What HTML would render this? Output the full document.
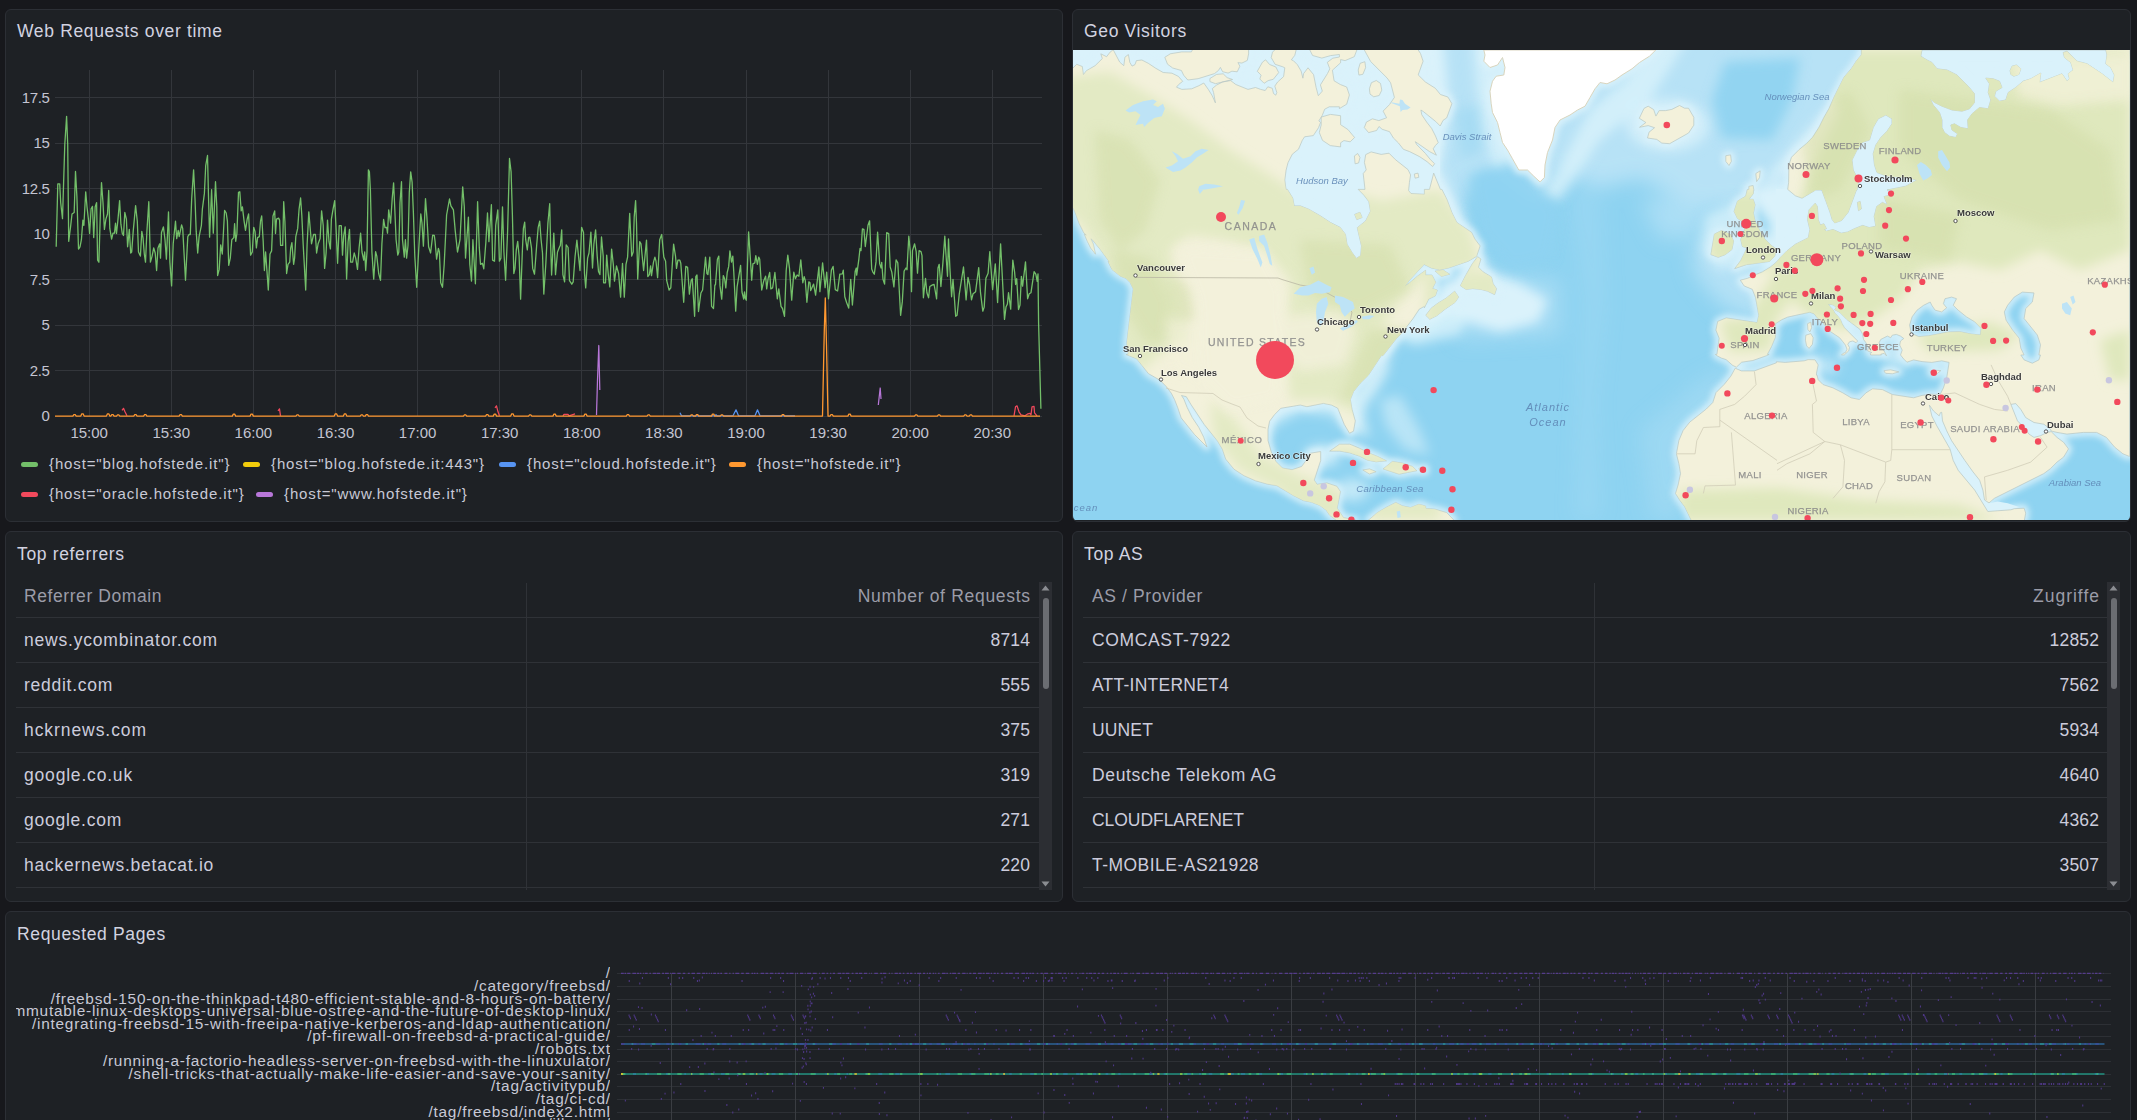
<!DOCTYPE html><html lang="en"><head><meta charset="utf-8"><title>Web traffic dashboard</title><style>
*{box-sizing:border-box;margin:0;padding:0}
html,body{width:2137px;height:1120px;overflow:hidden;background:#17181c;}
body{font-family:"Liberation Sans",sans-serif;color:#ccccdc;position:relative}
.panel{position:absolute;background:#1e2125;border:1px solid #2c2f35;border-radius:6px;overflow:hidden}
.title{position:absolute;left:11px;top:11px;font-size:17.5px;line-height:20px;font-weight:500;color:#d2d3e0;letter-spacing:.65px;white-space:nowrap}
.abs{position:absolute;white-space:nowrap}
.yl{position:absolute;width:43.5px;text-align:right;font-size:15px;line-height:16px;color:#c4c5d2;left:0;letter-spacing:-.35px}
.xl{position:absolute;width:80px;text-align:center;font-size:15px;line-height:16px;color:#c4c5d2;top:414.5px}
.lg{position:absolute;font-size:15px;line-height:18px;color:#c8c9d6;white-space:nowrap;letter-spacing:.87px}
.mk{position:absolute;width:17px;height:5px;border-radius:2.5px}
.th{position:absolute;font-size:17.5px;line-height:20px;color:#9b9ca8;white-space:nowrap;letter-spacing:.2px}
.td{position:absolute;font-size:17.5px;line-height:20px;color:#ccccdc;white-space:nowrap;letter-spacing:.2px}
.r{text-align:right}
.hl{position:absolute;height:1px;background:#2f3237}
.vl{position:absolute;width:1px;background:#2f3237}
.sbt{position:absolute;background:#2c2e33}
.sbh{position:absolute;background:#6b6d72;border-radius:3px}
.hm{position:absolute;right:0;text-align:right;font-size:15.4px;line-height:13px;color:#c8c9d6;white-space:nowrap;letter-spacing:.75px;margin-right:-.75px}
</style></head><body>
<div class="panel" style="left:5px;top:9px;width:1058px;height:513px">
<div class="title">Web Requests over time</div>
<div class="yl" style="top:79.8px">17.5</div>
<div class="yl" style="top:125.3px">15</div>
<div class="yl" style="top:170.8px">12.5</div>
<div class="yl" style="top:216.3px">10</div>
<div class="yl" style="top:261.8px">7.5</div>
<div class="yl" style="top:307.3px">5</div>
<div class="yl" style="top:352.8px">2.5</div>
<div class="yl" style="top:398.3px">0</div>
<div class="xl" style="left:43.2px">15:00</div>
<div class="xl" style="left:125.3px">15:30</div>
<div class="xl" style="left:207.4px">16:00</div>
<div class="xl" style="left:289.5px">16:30</div>
<div class="xl" style="left:371.6px">17:00</div>
<div class="xl" style="left:453.7px">17:30</div>
<div class="xl" style="left:535.8px">18:00</div>
<div class="xl" style="left:617.9px">18:30</div>
<div class="xl" style="left:700.0px">19:00</div>
<div class="xl" style="left:782.1px">19:30</div>
<div class="xl" style="left:864.2px">20:00</div>
<div class="xl" style="left:946.3px">20:30</div>
<svg class="abs" style="left:0;top:0" width="1056" height="440" viewBox="6 10 1056 440"><g stroke="#33363b" stroke-width="1" shape-rendering="crispEdges"><line x1="55" x2="1042" y1="97.5" y2="97.5"/><line x1="55" x2="1042" y1="143.5" y2="143.5"/><line x1="55" x2="1042" y1="188.5" y2="188.5"/><line x1="55" x2="1042" y1="234.5" y2="234.5"/><line x1="55" x2="1042" y1="279.5" y2="279.5"/><line x1="55" x2="1042" y1="325.5" y2="325.5"/><line x1="55" x2="1042" y1="370.5" y2="370.5"/><line x1="55" x2="1042" y1="416.5" y2="416.5"/><line x1="89.5" x2="89.5" y1="70" y2="416.5"/><line x1="171.5" x2="171.5" y1="70" y2="416.5"/><line x1="253.5" x2="253.5" y1="70" y2="416.5"/><line x1="335.5" x2="335.5" y1="70" y2="416.5"/><line x1="417.5" x2="417.5" y1="70" y2="416.5"/><line x1="499.5" x2="499.5" y1="70" y2="416.5"/><line x1="581.5" x2="581.5" y1="70" y2="416.5"/><line x1="663.5" x2="663.5" y1="70" y2="416.5"/><line x1="746.5" x2="746.5" y1="70" y2="416.5"/><line x1="828.5" x2="828.5" y1="70" y2="416.5"/><line x1="910.5" x2="910.5" y1="70" y2="416.5"/><line x1="992.5" x2="992.5" y1="70" y2="416.5"/></g><polyline fill="none" stroke="#73BF69" stroke-width="1.3" stroke-linejoin="round" points="56.2,246.8 57.8,183.8 59.7,183.8 60.7,202.7 62.5,218.7 64.8,144.2 66.6,116.4 67.7,144.2 68.7,241.3 70.5,227.3 72.0,214.0 74.2,212.5 75.5,171.5 76.9,196.5 78.5,249.1 80.0,246.8 81.4,239.7 82.9,220.1 83.9,225.3 85.7,191.8 87.0,206.8 88.4,219.1 89.6,233.5 91.1,208.8 92.5,206.4 93.7,237.6 95.2,206.8 96.6,202.7 97.6,260.2 98.9,262.2 100.3,215.0 101.5,182.6 103.0,202.7 104.4,229.4 105.9,219.1 107.5,214.0 108.7,190.4 109.8,228.4 111.6,239.2 113.0,233.1 114.5,233.1 115.5,223.2 116.5,233.5 118.0,219.1 119.6,200.6 120.9,224.2 122.3,233.5 123.5,235.5 124.8,212.5 126.4,219.1 127.6,246.8 129.3,229.4 130.7,253.0 131.7,252.0 133.2,231.4 135.6,205.6 137.3,221.2 138.5,252.0 140.4,256.1 141.8,231.4 143.0,237.6 144.3,254.0 145.5,262.2 146.9,231.4 148.8,201.7 150.4,262.2 152.1,256.1 153.7,247.9 155.2,253.0 156.6,270.5 158.0,247.9 159.7,243.8 160.5,258.1 161.5,232.5 163.4,226.9 165.0,239.7 166.4,259.2 168.5,211.9 169.9,262.2 171.6,285.9 173.2,243.8 175.5,221.2 176.7,238.6 178.2,230.4 179.2,236.6 181.6,224.9 182.7,228.4 185.5,280.3 187.8,236.6 189.0,234.5 190.3,234.5 191.7,198.6 193.6,169.8 195.0,198.6 196.2,231.4 197.7,253.0 199.1,236.6 201.4,225.3 202.4,208.8 204.4,193.4 205.7,165.7 207.5,155.5 208.5,196.5 209.6,237.2 211.6,189.7 213.3,233.1 215.5,181.7 216.8,206.8 217.6,275.6 219.2,269.4 220.7,244.8 222.3,254.0 224.6,210.3 226.2,213.0 227.4,221.2 228.7,265.3 230.3,258.1 231.8,239.7 233.8,237.6 234.6,223.6 235.7,241.3 236.9,233.5 238.5,192.4 239.8,191.8 241.2,210.9 242.4,206.8 244.1,221.2 245.5,230.4 247.2,219.1 248.6,214.0 250.6,255.1 252.3,252.0 253.7,227.3 255.0,231.4 256.4,247.9 257.6,237.6 259.3,236.6 260.5,221.2 261.7,216.0 263.2,241.7 264.4,270.5 265.6,252.0 268.3,290.0 270.0,254.0 271.6,250.9 273.0,216.0 274.7,210.9 275.5,233.5 276.5,219.1 278.6,218.1 279.6,220.1 280.6,245.4 282.7,245.4 283.7,201.7 284.9,221.2 286.6,273.5 288.0,264.3 289.7,262.2 290.7,247.9 291.9,242.7 293.6,264.3 294.6,258.1 295.8,236.6 297.7,228.4 299.1,208.8 300.6,198.0 301.8,215.0 303.2,244.8 305.7,290.0 307.1,244.8 308.8,211.9 311.5,243.8 313.6,234.5 315.4,234.5 316.6,253.0 318.1,243.8 320.1,238.6 321.6,210.9 323.2,225.3 324.6,268.4 326.1,253.0 327.5,220.1 329.0,241.7 330.4,248.9 331.4,219.1 333.1,208.8 334.7,200.6 336.1,229.4 337.6,263.3 339.2,225.7 341.3,225.7 342.5,255.1 343.7,235.5 345.2,226.9 346.6,279.1 348.1,241.7 349.5,229.4 350.7,262.2 352.6,262.2 354.2,253.0 355.7,258.1 357.5,269.4 359.1,247.9 360.6,233.1 362.0,252.0 363.7,260.2 364.7,252.0 365.7,270.5 367.0,252.0 368.4,169.8 369.4,171.9 370.4,190.4 371.9,252.0 373.7,279.1 375.6,251.6 376.8,256.1 378.7,273.5 380.5,280.3 381.9,243.8 383.6,219.5 385.0,227.7 386.7,227.3 387.5,233.1 388.7,209.9 390.6,223.2 392.2,198.6 393.6,182.8 394.7,206.8 396.1,239.7 397.8,255.1 398.8,252.0 400.0,202.7 401.5,181.7 402.5,239.7 404.3,257.1 405.4,239.7 406.6,258.1 408.0,245.8 409.3,192.4 410.7,171.9 412.1,182.1 413.4,213.0 414.8,256.1 416.7,287.3 418.7,249.9 420.8,214.0 422.0,223.2 423.4,246.2 425.5,198.6 426.9,217.1 428.6,246.8 430.6,253.0 432.7,235.1 434.3,235.5 435.1,241.7 436.6,259.2 438.4,248.3 439.4,252.0 440.7,282.8 442.5,287.3 444.2,264.3 446.6,215.0 449.5,199.0 450.9,205.8 453.4,209.9 455.3,231.4 457.5,252.0 460.0,239.7 462.7,186.9 464.3,206.8 465.5,258.1 468.4,217.1 469.8,264.3 471.5,281.1 472.9,239.7 475.4,283.8 477.6,201.7 479.3,247.9 480.5,264.3 482.4,263.3 483.8,268.8 485.9,241.7 487.5,213.0 488.9,241.7 491.4,204.7 492.6,260.2 494.5,261.2 495.7,225.3 497.8,209.9 499.4,261.2 500.9,258.1 502.5,206.8 503.9,252.0 505.6,280.3 507.6,231.4 509.5,158.5 511.1,171.9 512.4,215.0 513.8,273.5 515.0,268.4 516.3,249.9 517.7,241.3 519.1,256.1 520.6,299.2 522.4,249.9 523.4,228.4 524.7,222.2 525.7,239.7 527.3,249.9 528.6,237.6 529.8,237.2 531.5,247.9 532.7,268.4 534.5,274.2 536.8,243.8 538.2,227.3 539.7,221.2 541.1,239.7 542.5,253.0 543.8,294.1 545.8,264.3 547.9,223.2 549.7,203.7 550.6,243.8 551.6,275.0 553.8,233.1 555.5,274.6 557.5,252.0 560.0,245.8 560.3,245.8 561.7,229.8 562.9,274.6 564.6,281.8 566.2,244.8 568.1,247.5 569.5,280.7 571.8,284.2 573.2,281.8 575.1,256.1 576.9,240.1 578.5,256.1 580.0,270.5 581.6,227.3 583.5,232.5 584.5,273.5 585.7,287.9 587.6,258.1 589.0,253.0 590.9,232.1 592.5,268.0 593.9,243.8 595.6,229.8 597.2,256.1 598.5,271.5 599.9,274.6 601.5,237.0 603.2,256.1 603.6,282.8 605.5,282.8 606.7,255.1 608.3,274.6 609.8,286.9 611.6,249.1 613.3,264.3 614.5,281.1 616.5,265.9 618.6,273.5 620.6,297.2 622.5,263.3 624.3,297.2 626.0,264.3 627.6,257.1 629.7,213.4 631.7,256.1 633.2,252.0 634.2,217.1 635.6,200.6 636.5,223.2 637.7,279.1 639.7,241.7 641.0,243.8 643.6,270.5 646.5,240.1 647.8,276.6 649.4,274.6 650.6,265.9 651.5,275.6 653.5,262.2 654.9,257.1 656.0,261.2 657.6,277.6 659.7,239.7 661.7,234.5 663.8,257.1 665.6,261.2 666.7,280.7 669.1,290.0 670.8,287.9 673.6,244.2 675.5,256.1 676.5,268.4 677.9,260.2 679.8,260.2 680.8,263.3 683.7,302.3 685.8,266.4 687.6,267.4 689.4,294.1 691.1,280.7 692.3,278.7 694.6,316.3 695.8,276.6 697.0,275.0 698.5,311.5 700.9,293.0 702.6,290.0 705.5,257.1 706.9,273.5 707.9,274.6 709.8,257.1 711.6,306.4 713.5,308.5 714.9,284.8 715.5,284.8 717.4,259.2 718.8,256.1 720.0,285.9 721.7,299.2 723.3,275.6 724.6,278.7 725.8,287.9 727.2,272.5 728.7,266.4 729.9,250.9 731.5,262.2 732.8,256.1 733.8,272.5 735.7,311.1 737.1,286.9 738.9,275.6 740.6,265.3 742.0,292.0 743.7,299.2 744.5,292.0 745.3,298.2 746.3,300.2 748.6,231.8 750.2,256.1 751.7,280.3 752.9,263.9 754.8,262.9 755.8,255.7 757.4,264.3 758.7,257.1 759.7,259.2 761.7,290.0 763.8,280.7 765.6,276.2 766.7,288.9 768.1,278.7 769.7,272.5 770.8,288.9 772.6,287.9 774.9,272.5 777.3,298.8 778.8,288.9 781.0,306.4 782.5,308.5 784.5,316.3 786.2,270.5 787.8,255.1 789.5,268.4 791.7,300.2 793.8,272.1 795.4,278.7 797.1,275.0 798.9,276.2 800.8,259.8 802.8,282.8 804.2,276.6 805.3,280.7 806.9,302.3 808.8,281.8 810.0,282.8 810.7,290.6 813.6,284.1 815.6,295.2 818.9,267.0 819.9,291.7 822.6,262.9 825.1,287.6 826.7,272.1 828.5,298.8 831.4,270.1 833.1,266.4 835.3,289.6 837.6,291.0 839.8,274.2 842.3,273.8 843.3,270.1 844.8,296.8 846.6,302.5 848.7,308.1 850.7,279.3 852.4,305.0 855.2,271.1 856.3,268.0 856.7,275.2 858.9,258.8 860.0,248.5 861.0,250.6 862.4,229.0 863.9,229.4 865.3,246.5 868.0,225.3 869.6,220.8 871.7,269.1 872.9,272.1 874.3,274.2 876.0,261.9 877.6,232.1 879.7,263.9 881.1,268.0 881.7,262.3 883.0,279.3 884.6,284.1 886.7,232.7 888.7,233.5 890.2,267.0 891.8,272.1 893.9,286.9 896.1,259.8 897.8,262.9 900.6,315.3 902.3,301.9 904.1,271.1 906.0,268.0 907.0,269.7 908.8,236.2 910.3,251.6 911.5,291.7 912.5,250.6 914.6,243.8 916.2,251.6 917.5,273.2 919.1,250.6 921.0,251.6 922.0,255.7 923.4,297.8 925.5,278.3 926.9,292.7 928.6,297.8 929.8,286.5 932.5,284.9 934.1,284.5 936.6,298.8 938.0,268.0 939.2,264.3 940.9,286.5 942.9,262.9 944.8,236.2 946.2,257.8 947.5,276.3 948.5,238.9 949.9,268.0 951.6,296.8 953.0,279.3 955.7,316.3 957.1,315.3 959.2,294.7 963.5,267.0 966.1,299.9 968.0,277.3 969.6,284.5 971.5,299.9 973.1,293.7 975.6,291.7 978.7,267.6 980.5,292.7 982.8,311.2 984.2,307.1 985.9,278.3 988.1,273.2 989.8,251.6 991.2,271.1 992.6,289.6 995.3,263.9 997.6,302.5 1000.6,243.8 1002.3,276.3 1004.5,319.4 1006.0,307.1 1007.4,304.0 1008.5,292.7 1010.7,309.1 1012.8,260.2 1014.6,272.1 1015.6,284.5 1016.7,278.7 1018.5,309.5 1020.0,305.0 1021.4,276.3 1022.6,286.1 1025.5,261.9 1027.6,298.8 1029.2,293.7 1031.0,292.7 1034.1,271.7 1035.8,274.2 1037.2,281.4 1038.0,273.8 1038.6,323.5 1040.9,408.7"/><polyline fill="none" stroke="#B877D9" stroke-width="1.25" stroke-linejoin="round" points="596.5,415 597.5,380 598.8,345.5 599.8,390"/><polyline fill="none" stroke="#B877D9" stroke-width="1.25" stroke-linejoin="round" points="878.3,405 879.3,396 880.2,388 881,399"/><polyline fill="none" stroke="#5794F2" stroke-width="1.25" stroke-linejoin="round" points="680,412.8 681.5,415.8 690,415.8 715,415.8 716,414.8 717,415.8 733,415.8 736,409.8 738.5,415.8 755,415.8 757.5,409.8 760,415.8 795,415.8"/><polyline fill="none" stroke="#F2495C" stroke-width="1.25" stroke-linejoin="round" points="122,410.3 123.5,408.3 125,411.8 127,415.8"/><polyline fill="none" stroke="#F2495C" stroke-width="1.25" stroke-linejoin="round" points="278,410.8 279.5,408.8 280.5,415.8"/><polyline fill="none" stroke="#F2495C" stroke-width="1.25" stroke-linejoin="round" points="495,407.8 496.5,405.8 498,411.8 499.5,415.8"/><polyline fill="none" stroke="#F2495C" stroke-width="1.25" stroke-linejoin="round" points="563,415.8 564,414.3 568,414.3 569,415.8 572,414.8 575,413.8"/><polyline fill="none" stroke="#F2495C" stroke-width="1.25" stroke-linejoin="round" points="1014,415.8 1015.5,406.8 1017,405.8 1019,411.8 1021,414.8 1025,415.8 1028,413.8 1030,413.3 1031,414.8 1032,406.8 1034,406.3 1034.5,412.8 1037,415.8"/><polyline fill="none" stroke="#FF9830" stroke-width="1.3" stroke-linejoin="round" points="55,416.1 72.8897437750463,416.1 73.8897437750463,414.6 75.1897437750463,414.6 76.1897437750463,416.1 80.8132719614444,416.1 81.8132719614444,413.8 83.1132719614444,413.8 84.1132719614444,416.1 106.47240104959728,416.1 107.47240104959728,413.8 108.77240104959728,413.8 109.77240104959728,416.1 110.76993692993591,416.1 111.76993692993591,414.6 113.0699369299359,414.6 114.0699369299359,416.1 116.50759264792596,416.1 117.50759264792596,414.9 118.80759264792596,414.9 119.80759264792596,416.1 133.75310173341842,416.1 134.75310173341842,414.6 136.05310173341843,414.6 137.05310173341843,416.1 143.61537673950605,416.1 144.61537673950605,414.6 145.91537673950606,414.6 146.91537673950606,416.1 179.0848311449592,416.1 180.0848311449592,414.6 181.3848311449592,414.6 182.3848311449592,416.1 232.34998937652418,416.1 233.34998937652418,414.1 234.6499893765242,414.1 235.6499893765242,416.1 250.04510099672981,416.1 251.04510099672981,414.1 252.34510099672983,414.1 253.34510099672983,416.1 295.9509492026821,416.1 296.9509492026821,414.9 298.25094920268214,414.9 299.25094920268214,416.1 334.2540460419125,416.1 335.2540460419125,413.8 336.5540460419125,413.8 337.5540460419125,416.1 343.43795286010356,416.1 344.43795286010356,413.8 345.7379528601036,413.8 346.7379528601036,416.1 360.161168348671,416.1 361.161168348671,414.9 362.46116834867104,414.9 363.46116834867104,416.1 365.21847471961325,416.1 366.21847471961325,414.6 367.51847471961327,414.6 368.51847471961327,416.1 463.44800676338724,416.1 464.44800676338724,414.9 465.74800676338725,414.9 466.74800676338725,416.1 485.5658438591772,416.1 486.5658438591772,414.6 487.86584385917723,414.6 488.86584385917723,416.1 493.2502577859081,416.1 494.2502577859081,414.1 495.5502577859081,414.1 496.5502577859081,416.1 510.7245805617545,416.1 511.7245805617545,413.8 513.0245805617545,413.8 514.0245805617545,416.1 528.5215434561455,416.1 529.5215434561455,414.9 530.8215434561455,414.9 531.8215434561455,416.1 552.9691516035233,416.1 553.9691516035233,414.1 555.2691516035233,414.1 556.2691516035233,416.1 583.8661720374074,416.1 584.8661720374074,414.1 586.1661720374074,414.1 587.1661720374074,416.1 626.286127561213,416.1 627.286127561213,414.6 628.586127561213,414.6 629.586127561213,416.1 647.0191455550306,416.1 648.0191455550306,414.9 649.3191455550306,414.9 650.3191455550306,416.1 690.1155184768011,416.1 691.1155184768011,414.9 692.415518476801,414.9 693.415518476801,416.1 695.4765934371854,416.1 696.4765934371854,414.6 697.7765934371854,414.6 698.7765934371854,416.1 711.475134718921,416.1 712.475134718921,414.1 713.775134718921,414.1 714.775134718921,416.1 720.272997188019,416.1 721.272997188019,414.9 722.5729971880189,414.9 723.5729971880189,416.1 781.3218815184964,416.1 782.3218815184964,414.6 783.6218815184964,414.6 784.6218815184964,416.1 822.5,416.1 824.3,330 825.3,298 826.5,345 828,416.1 830,416.1 831,414.6 832.3,414.6 833.3,416.1 847.8644091386972,416.1 848.8644091386972,414.1 850.1644091386971,414.1 851.1644091386971,416.1 914.5369983888482,416.1 915.5369983888482,414.9 916.8369983888482,414.9 917.8369983888482,416.1 937.3574032194496,416.1 938.3574032194496,414.9 939.6574032194495,414.9 940.6574032194495,416.1 963.722468849548,416.1 964.722468849548,414.9 966.022468849548,414.9 967.022468849548,416.1 969.2134347758066,416.1 970.2134347758066,414.9 971.5134347758066,414.9 972.5134347758066,416.1 1040,416.1"/></svg>
<div class="mk" style="left:15px;top:451.5px;background:#73BF69"></div>
<div class="lg" style="left:43px;top:444.5px">{host=&quot;blog.hofstede.it&quot;}</div>
<div class="mk" style="left:237px;top:451.5px;background:#F2CC0C"></div>
<div class="lg" style="left:265px;top:444.5px">{host=&quot;blog.hofstede.it:443&quot;}</div>
<div class="mk" style="left:493px;top:451.5px;background:#5794F2"></div>
<div class="lg" style="left:521px;top:444.5px">{host=&quot;cloud.hofstede.it&quot;}</div>
<div class="mk" style="left:723px;top:451.5px;background:#FF9830"></div>
<div class="lg" style="left:751px;top:444.5px">{host=&quot;hofstede.it&quot;}</div>
<div class="mk" style="left:15px;top:481.5px;background:#F2495C"></div>
<div class="lg" style="left:43px;top:474.5px">{host=&quot;oracle.hofstede.it&quot;}</div>
<div class="mk" style="left:250px;top:481.5px;background:#B877D9"></div>
<div class="lg" style="left:278px;top:474.5px">{host=&quot;www.hofstede.it&quot;}</div>
</div>
<div class="panel" style="left:1072px;top:9px;width:1059px;height:513px">
<div class="title">Geo Visitors</div>
<svg class="abs" style="left:0;top:40px" width="1057" height="470" viewBox="1073 50 1057 470" font-family="Liberation Sans, sans-serif"><defs><filter id="b3" x="-10%" y="-10%" width="120%" height="120%"><feGaussianBlur stdDeviation="3"/></filter><filter id="b6" x="-20%" y="-20%" width="140%" height="140%"><feGaussianBlur stdDeviation="6"/></filter><filter id="b10" x="-30%" y="-30%" width="160%" height="160%"><feGaussianBlur stdDeviation="10"/></filter><path id="land" fill-rule="evenodd" clip-rule="evenodd" d="M1327.5 73.5L1320.4 84.9L1322.3 91.1L1318.3 95.7L1316.1 87.4L1313.6 74.7L1308 67.8L1303.6 73.6L1302.9 78.2L1301.1 71L1297.3 64.6L1293.4 60.7L1291.4 59.8L1294.8 55.3L1296.3 49.4L1275.3 49.4L1272.5 52.2L1271.2 57.6L1275.1 64.3L1282.8 66.8L1284.8 67.8L1283.6 76.6L1277.5 82.1L1274.8 86.1L1276.8 92.5L1275.8 95.2L1273.5 93.5L1272.3 88.3L1267.8 86.8L1265.2 90.5L1260.7 89.4L1255.5 87.5L1248 89.4L1235.8 84.5L1230.7 80.6L1222.8 81.9L1216.5 85.1L1212.3 88.6L1213.6 92.6L1215.4 102.8L1212.3 95.9L1208.5 89.7L1203.8 83L1198.9 85.7L1191.7 88.8L1181.9 89.4L1176.5 87.2L1178.4 84.8L1182.7 81.3L1178.4 76.4L1172 73.2L1163.2 72.5L1155.8 68.3L1148.3 63.3L1141.9 60L1136.4 60.6L1135 64.6L1132 66.1L1129.8 62.3L1128.4 54.5L1124.9 57.2L1123.8 65.7L1119.7 62.1L1113.2 49.7L1110.1 52.1L1106.6 56.7L1100.8 53.8L1102.3 58.6L1095.1 65.7L1086.4 70.7L1083.4 74.7L1082.3 66.5L1076.7 64.3L1072.4 68.6L1072.4 206.6L1074.9 211.6L1079 223.1L1084 233.2L1086.3 235L1084.3 234.2L1087.3 241.3L1090.6 248L1095.5 254.2L1093.4 244.2L1090.9 238.7L1092.4 239.8L1100.5 249.7L1109.5 262L1108.1 261.6L1112 269.5L1120.5 276.2L1125.9 278.3L1130.2 282.6L1133.3 288.9L1126.8 343.2L1128.3 354.4L1126 354.5L1136.8 358.8L1148.4 373.6L1159.9 380.2L1166.4 386.7L1171.3 393.2L1174.6 399.7L1177.8 407.9L1181.2 417.9L1194.5 434.5L1207 447L1203.7 437.2L1198.7 427.2L1192.1 417.3L1187.2 407.5L1183.9 399.2L1181.5 395.5L1186.3 396.7L1191.1 404.7L1204.3 424.6L1217.5 441L1222.4 449.2L1225.7 459.1L1234 469.2L1244 475.7L1255.6 480.8L1267.3 484.1L1277 485.7L1293.4 495.5L1303.4 500.6L1311.6 502.2L1319.8 505.4L1326.3 510.2L1329.6 515.2L1336.3 520.3L1339.8 520.6L1356 520.6L1356 520L1343.5 517.6L1337.1 508.1L1340.4 491.6L1336.9 486.3L1326.8 482.9L1317.1 484.4L1314.2 480.1L1320.7 460.5L1320.7 451.5L1309.8 453.3L1306.4 460.1L1301.6 466.5L1292.1 469.7L1282.5 468.1L1276.1 461.7L1271.3 452L1268 440.6L1268 429.2L1269.6 421.2L1274.5 414.7L1280.8 408.3L1300.3 405L1306.9 406.7L1323.4 403.4L1331.4 405L1337.7 408.1L1344.3 424.5L1349.5 433.2L1353.5 431.2L1355.3 420.9L1352 409.3L1350.3 399.6L1353.5 391.5L1360 383.4L1368.3 375.2L1381.3 355.6L1383 355.6L1396.3 338.6L1401.3 333.7L1412.8 318.9L1419.3 309.1L1424.4 306.3L1424.4 307.8L1428.7 299.1L1435.4 295.8L1437.3 290.1L1432.4 288.5L1435.6 282.2L1432 275.1L1425.6 275.1L1425.6 270.3L1417.7 276L1409.4 283.1L1405 286.2L1409.5 280.2L1424.4 264L1424.4 264.5L1431.4 268L1439.8 269.7L1448.3 268L1468.1 261.3L1476.6 256.3L1480.1 245.9L1474.9 239.1L1471.6 232.4L1456.8 222.5L1452 212.9L1447 199.7L1441.9 189.4L1440.4 189.4L1433.7 173.1L1429.5 189.4L1424.4 189.4L1424.4 194.3L1411 193.5L1408.6 190.6L1409.4 182.6L1410.6 174.9L1408 169.6L1395.4 159.6L1389 153.2L1381.2 154.4L1371.1 151.9L1365.7 154.6L1364.4 162.5L1366.2 169.9L1363.2 173.6L1365 189.4L1358.2 189.4L1364 195.3L1368.9 201.7L1370.5 211.3L1365.7 220.9L1357.3 227.7L1361.5 246L1360.7 255.6L1356.4 258.4L1351.9 252.3L1347 244.2L1345.4 234.3L1340.2 227.4L1330.3 222.4L1320.4 215.9L1308.8 209.3L1300.4 205.9L1294.2 205.9L1292.7 198L1287.4 189.4L1286 189.4L1284.8 180L1286.1 170.1L1288 162.7L1292.3 154.2L1298.5 149.2L1302.3 140.3L1304.6 136.8L1313.3 135.6L1318.5 127.8L1320.6 122.3L1318.8 121L1321.2 117.1L1321.2 124.9L1319.3 132.5L1322.5 140.4L1330.3 145.6L1340.6 146.9L1340.6 142.8L1343.9 140.6L1350.2 141.8L1354.6 137.5L1347.9 129.5L1340.6 124.7L1340.6 115.7L1330.5 114.4L1321.3 117L1322.3 115.3L1324.7 109.2L1329.3 106.8L1339.4 106.8L1339.4 108.6L1346.7 104.2L1349.4 95L1346.7 87L1340.3 84.5L1334.1 80.8L1332.4 70.2L1340.6 62.8L1340.6 59.6L1345.1 60.6L1354.3 56.7L1357.1 49.4L1309.5 49.4L1312.6 55.5L1321.8 58.1L1330.6 55.6L1339.4 54.5L1339.4 57L1332.8 58.2L1327.3 62.3L1329.8 68.8ZM1218.5 70.4L1220.4 67.4L1222.6 71.7L1228.1 73.1L1231.9 71.2L1237.2 71.8L1239.9 66.2L1237.9 62.6L1241.9 63.1L1247.3 60.4L1248.6 53.9L1248.6 49.4L1192.6 49.4L1191.4 51.9L1181.7 51.9L1170.3 53.8L1164.8 57.3L1167.5 64.2L1172.7 68L1181.4 70.5L1183.7 75.3L1187.8 80L1198.1 78.7L1214.5 73.6ZM1262.5 62.1L1257.3 71.3L1261.1 75.2L1259.8 79L1264.1 83.3L1268.2 80.6L1273.3 79.3L1278.7 72.6L1275.9 67L1269.6 64.5L1265.6 59.8ZM1215.5 83.7L1223.1 81.8L1232.6 79.5L1227.1 77.6L1223.2 73.8L1216.6 74.4L1209.9 78.5L1209.9 81.6ZM1354.4 155.9L1355.1 163.8L1358.6 163L1360 157.4L1357.7 153.5ZM1362.1 217.5L1359.9 212.3L1354.7 214.4L1356.8 219.6ZM1349.8 444.2L1339.6 444.2L1329.7 451.1L1339.7 451.1L1349.6 452.8L1359.4 456.1L1367.6 460.2L1376.1 461.8L1386.4 460.8L1377.9 456.6L1369.7 453.3L1359.8 448.4ZM1364.9 61.7L1360.1 63.3L1358.2 70L1358.9 75.1L1362.9 74.3L1365.6 67.6ZM1370 94.1L1373.7 96.8L1379.2 95.5L1381.8 90.1L1380.5 83.4L1376.3 80.5L1371.4 82.7L1369.4 88.7ZM1372.4 118.8L1366.4 122.1L1364.3 127.6L1368.6 132.6L1376.6 130.5L1379 126.5L1382.2 129.3L1389.6 131.7L1393.3 137.9L1398.4 142.9L1403.4 149.3L1409.8 151.7L1419.7 156.7L1427.1 161.7L1432.6 166.5L1434.6 163.7L1430.4 159.6L1425.4 153.4L1416.7 144.6L1415.3 141.7L1429.7 151.7L1436.4 155.2L1433.2 148.8L1435.5 145.4L1438.2 142.6L1435.5 136L1431.7 128.5L1426.7 122.1L1421.8 114.8L1420.9 110L1423.5 111.7L1435.8 121.6L1440.2 126L1443 120.4L1446.7 117.9L1451.9 103.7L1447.9 97L1440.4 94.5L1435.4 88.3L1425.4 82L1418.2 74.9L1423.1 61.2L1420.5 53.5L1417.8 49.4L1364 49.4L1370.7 61.6L1387 77.9L1390.6 82.8L1394.4 97.4L1389.5 104.6L1383.1 111.1L1386.6 117.8L1378.8 120.6ZM1415.1 178.2L1418.8 177.3L1418 173.1L1414.3 174ZM1441.4 276.4L1449.6 274.2L1443.2 270.1L1435.1 271.1ZM1483.1 271.9L1478.4 267.2L1480.9 259L1477.6 256.7L1472.3 263.8L1465.7 275.4L1460.4 285.7L1466.1 289.4L1472.8 288.6L1480.9 289.4L1487.4 291.1L1494.6 294.6L1496.5 288.7L1493.1 283.7L1491.4 276.9ZM1425.8 315.3L1429.8 319.2L1436.8 315.7L1445.2 309.1L1455 302.4L1458.6 297.1L1454.7 291.2L1446.1 298.2L1437.9 303.2L1431.2 308.2ZM1399.1 474.2L1407.5 472.5L1416.8 470.7L1412.6 466.5L1402.5 463.1L1392.4 461.5L1383.1 468.9ZM1420.2 471.7L1425.6 471.7L1425.6 467.7L1418.9 468.2ZM1376.1 471.7L1369.6 468.9L1362.8 470L1369.4 474ZM1367.9 520.6L1454.4 520.6L1446.7 512.6L1435 509.2L1425.6 508.4L1425.6 506L1418.9 504.3L1410.6 507.6L1402.6 505.9L1395.8 502.5L1385.7 507.7L1377.4 512.6ZM1806.6 143.4L1799.1 149.6L1791.5 157.2L1788.9 164.9L1788.6 182.5L1787.7 189.4L1795.4 195.8L1802 198.2L1815.7 190L1821.8 190L1830 212.2L1832.2 219.6L1834.7 222.9L1841.6 220.5L1848.2 212.2L1856.4 190L1857 190L1858.2 182.5L1855.8 175L1853.2 170L1852 160L1857 150L1862 142.5L1869.5 140L1873.2 127.5L1878.2 118.8L1885.8 115L1892 118.8L1892 123.8L1887 131.2L1880.8 137.5L1875.8 145L1873.2 153.8L1874.5 165L1877 172.5L1887 176.2L1905.8 177.5L1917 180L1905.8 186.2L1887 190L1892.3 190L1890.7 194.9L1884.1 196.6L1887.4 204.8L1882.4 202.4L1876.7 206.5L1874.2 216.4L1875.8 226.2L1869.2 227.6L1862.7 225.4L1854.4 228.7L1847.8 232L1841.2 233.2L1833 229.5L1826.4 231.2L1824 229.6L1826.4 228.7L1823.9 223.8L1820.3 225L1818.2 219.6L1817.4 206.5L1815.2 203.2L1809.1 209.8L1807.5 219.6L1809.9 229.5L1808.3 237.8L1795.1 244.4L1786.9 250.9L1780.3 257.5L1776.4 262.2L1770.6 266.9L1762.4 271.9L1754.2 275.2L1747.6 278.3L1740.3 280.2L1744.2 286L1752.3 289.3L1755.5 297.3L1758.8 315.2L1757.2 322.7L1726.3 317.9L1717.7 321.4L1715.9 330.1L1719.2 338.3L1716.9 354.4L1715.3 354.4L1716.7 355.6L1721.2 358L1726.1 359.6L1732.7 365.4L1736.4 367.2L1741.6 362.2L1752.9 360.5L1766.7 355.6L1769.1 354.4L1767.3 354.4L1771.4 346.8L1775.4 337.2L1775.4 323.7L1781.9 319.6L1787.7 317.1L1809.9 312.2L1814.1 313.8L1817.4 317.9L1821.5 321.2L1829.7 331.1L1839.6 337.7L1842.9 341.8L1845.4 345.1L1847 349.2L1845.4 352.5L1842.9 353.4L1841.5 355L1844.2 355L1848.7 350.9L1849.5 347.6L1847.8 344.3L1849.5 341.8L1852.8 341L1856.1 342.7L1857.7 341L1844.5 327.8L1842.1 323.7L1840.4 319.6L1837.9 316.3L1834.7 313L1833 309.7L1829.7 306.4L1828.1 303.9L1833 304.8L1836.3 307.2L1834.7 309.7L1839.6 312.2L1847 319.6L1860.2 329.5L1862.7 334.4L1863.5 339.4L1865.9 342.7L1868.4 347.6L1867.6 350.9L1871.7 352.5L1870.1 353.4L1870.7 355L1881.4 355L1880.8 354.2L1884.1 353.4L1886.5 355.8L1884.1 350.9L1880.8 347.6L1879.1 342.7L1880.8 339.4L1887.4 336.1L1890.7 337.7L1892.3 335.2L1896.4 334.4L1900.5 336.1L1903.8 338.5L1900.5 341L1899.7 345.1L1902.2 350.1L1900.5 355L1903.8 359.1L1906.9 362.2L1913.7 359.9L1922 361.6L1931.8 362.4L1941.7 360.8L1949.1 362.4L1946.7 378.1L1943.4 387.9L1940.1 394.5L1930.2 394.2L1922 395.4L1913.7 397.8L1892.3 394.5L1882.4 389.6L1872.5 388.8L1865.9 392.9L1859.4 399.5L1851.1 397.8L1842.9 392.9L1833 387.9L1823.1 384.6L1818.2 379.7L1817 375L1816.5 375L1816.5 373.1L1818.2 364.9L1815 359.8L1808.2 359.6L1804.2 360.8L1785.2 362.4L1776.4 361.7L1776.4 362.8L1754.3 370.9L1741.4 370.9L1735.2 368.2L1730.9 376.1L1724.4 384.2L1716 392.6L1712.8 402.5L1706.3 409L1689.8 422.1L1683.1 430.5L1678.9 440.5L1676.4 453.8L1678.9 463.8L1680.5 473.6L1678.1 485L1675.5 493.5L1679.8 500.3L1684.8 506.8L1691.4 520.6L2024.3 520.6L2025.7 513.1L2024.1 508.2L2014.3 508.7L2010.9 509.8L1987.8 511.5L1974.7 490.1L1958.2 470.3L1953.2 460.4L1950 448.9L1936.8 425.8L1931.8 415.9L1929.4 405.2L1933.5 411L1939.2 415.9L1940.4 412.7L1941.7 412.3L1942.5 420.9L1946.7 430.8L1951.6 440.7L1964.8 460.4L1973 471.9L1979.6 480.2L1982.9 490.1L1984.5 500L1989 502.9L1994.4 498.3L2043.8 473.6L2050.4 468.7L2057 462.1L2063.6 457.1L2068.5 448.9L2063.6 442.3L2057 437.4L2051.2 431.6L2047.1 432.4L2040.5 435.7L2034 437.4L2029 434.1L2024.1 427.5L2017.5 420.9L2010.9 404.4L2015.8 403.6L2020.8 409.4L2025.7 417.6L2034 422.5L2043.8 424.2L2050.4 429.1L2051.1 431L2057 432.4L2066.9 434.1L2083.4 432.4L2096.6 432.4L2106.4 437.4L2114.7 447.2L2122.9 453.8L2129.6 456.5L2129.6 49.4L1861.4 49.4L1861.4 54.8L1856.5 60.8L1851.5 68.4L1844 77.2L1834 97.2L1829 108.5L1824 117.2L1819 127.2L1812.7 137.1ZM1909.6 325.1L1912.1 316.8L1917 310.2L1923.6 305.3L1930.2 302L1931.8 305.3L1935.1 310.2L1941.7 311.9L1946.7 307.8L1943.4 303.7L1945 298.7L1951.6 297.1L1956.5 298.7L1953.2 305.3L1958.2 310.2L1966.4 316.8L1974.7 321.8L1981.2 328.4L1980.4 335L1971.4 334.1L1959.8 331.7L1948.3 332L1928.5 335.8L1918.7 336.6L1911.2 333.3ZM2105.8 50L2107 55L2105.8 63.8L2110.8 67.5L2114.5 75L2113.2 82.5L2102 73.8L2087 63.8L2077 61.2L2067 51.2L2063.2 52.5L2064.5 57.5L2070.8 62.5L2073.2 70L2068.2 73.8L2069.5 78.8L2067 81.2L2062 73.8L2039.5 82.5L2040.8 73.1L2030.8 78.8L2023.2 81.2L2015.8 87.5L2008.2 92.5L2005.8 100L1999.5 101.2L1994.5 96.2L1995.8 91.2L2002 87.5L1999.5 81.2L1993.2 78.8L1985.8 78.1L1989.5 83.8L1988.2 92.5L1990.8 100L1988.2 108.8L1979.5 107.5L1972 113.8L1967.6 120L1968.2 128.8L1960.8 127.5L1954.5 123.8L1950.8 125L1952 130L1957.6 133.8L1955.8 137.5L1949.5 136.2L1944.5 132.5L1942 127.5L1942 120L1939.5 112.5L1933.2 105L1930.1 98.8L1934.5 102.5L1942 106.2L1952 110L1962 111.2L1969.5 108.8L1974.5 102.5L1974.5 93.8L1968.2 86.2L1957 75L1947 70L1937 68.8L1932 62.5L1927 60L1920.8 56.2L1922 50ZM2038.9 355L2040.5 355L2038.9 359.9L2032.3 363.2L2024.1 359.9L2020.8 355L2024.1 355L2020.8 348.1L2019.1 338.2L2012.5 330L2006 320.1L2004.3 311.9L2007.6 305.3L2014.2 297.1L2022.4 292.1L2034 292.9L2032.3 302L2025.7 308.6L2024.1 318.5L2037.3 335L2040.5 344.8ZM1755 221.1L1753.4 213.1L1755 204.8L1753.2 199.3L1749 199.3L1753.4 193.5L1753.4 190.6L1753.9 190.6L1753.1 185.5L1748.9 186.4L1748.9 189.4L1747.3 189.4L1745.7 196.2L1737.5 201.1L1734.1 211.4L1737.5 218.4L1745.5 223.2L1744 232.6L1740.7 239.3L1742.4 246.5L1747 248L1740.8 260.5L1734.7 268.6L1746.3 264.7L1769.6 261.4L1774.7 256.2L1776 251L1776 248.7L1771.3 245.5L1764.8 239L1759.9 230.9ZM1669.6 143.7L1688.6 133L1693.8 125.2L1693.8 117.3L1688.5 108.2L1684.6 108.2L1679.5 105.5L1671.8 109.4L1665.7 110.6L1659.2 110.6L1655.9 116.1L1653.7 109.6L1648.2 106.2L1644 108.4L1639.3 118.3L1645.9 122.5L1639.5 127.3L1648.2 125.6L1654.6 127.7L1649 132.2L1647.5 138L1656.8 139.4L1661.8 143.1ZM1725.8 155.7L1725.8 161.4L1729 165.5L1731.4 161.3L1730.6 154.9ZM1759.5 177.7L1760.2 170.8L1755.8 173.5L1756.6 181.6ZM1718.2 257.3L1725.1 254.7L1731.9 249.6L1733.6 241L1730.1 234L1721.5 230.5L1714.4 234.1L1710.9 254.6ZM2012 66.2L2010.1 70.6L2010.8 74.4L2013.9 76.2L2018.9 74.4L2020.8 68.8L2016.4 65ZM1861.3 208.9L1860.2 201.5L1857.4 202.4L1858.5 210.6ZM1807.9 329.5L1809.9 331.9L1811.6 327.8L1810.8 322.1L1807.5 323.7ZM1810.8 333.6L1805.8 335.2L1805.4 340.2L1806.6 345.9L1809.1 348.4L1812.4 344.3L1813.2 337.7ZM1884.1 371.5L1885.7 373.3L1892.3 373.8L1898.9 371.9L1890.7 369.8L1884.1 370.6L1884.7 371.4ZM1931.8 373.9L1936.8 373.9L1940.9 370.6L1935.1 370.2L1930.2 371.5Z"/><path id="ice" d="M1485 55L1483.8 61.2L1490 67.5L1497.5 65L1502.5 57.5L1505 67.5L1503.8 75L1496.2 76.2L1492.5 81.2L1490 91.2L1491.2 103.8L1492.5 112.5L1497.5 122.5L1500 132.5L1502.5 142.5L1507.5 150L1512.5 158.8L1518.8 170L1527.5 170L1533.8 176.2L1540 181.9L1544.4 177.5L1545 165L1547.5 152.5L1552.5 140L1555 127.5L1560 120L1570 115L1577.5 110L1585 106.2L1590 97.5L1595 88.8L1600 82.5L1607 83.8L1615 80L1622 75L1632 68.8L1639.5 62.5L1649.5 56.2L1655.8 50L1483.8 50Z"/><path id="sea" d="M1927 60L1932 62.5L1937 68.8L1947 70L1957 75L1968.2 86.2L1974.5 93.8L1974.5 102.5L1969.5 108.8L1962 111.2L1952 110L1942 106.2L1934.5 102.5L1930.1 98.8L1933.2 105L1939.5 112.5L1942 120L1942 127.5L1944.5 132.5L1949.5 136.2L1955.8 137.5L1957.6 133.8L1952 130L1950.8 125L1954.5 123.8L1960.8 127.5L1968.2 128.8L1967.6 120L1972 113.8L1979.5 107.5L1988.2 108.8L1990.8 100L1988.2 92.5L1989.5 83.8L1985.8 78.1L1993.2 78.8L1999.5 81.2L2002 87.5L1995.8 91.2L1994.5 96.2L1999.5 101.2L2005.8 100L2008.2 92.5L2015.8 87.5L2023.2 81.2L2030.8 78.8L2040.8 73.1L2039.5 82.5L2045.8 80L2054.5 76.9L2062 73.8L2067 81.2L2069.5 78.8L2068.2 73.8L2073.2 70L2070.8 62.5L2064.5 57.5L2063.2 52.5L2067 51.2L2073.2 57.5L2077 61.2L2087 63.8L2094.5 68.8L2102 73.8L2108.2 78.8L2113.2 82.5L2114.5 75L2110.8 67.5L2105.8 63.8L2107 55L2105.8 50L1922 50L1920.8 56.2ZM1905.8 177.5L1887 176.2L1877 172.5L1874.5 165L1873.2 153.8L1875.8 145L1880.8 137.5L1887 131.2L1892 123.8L1892 118.8L1885.8 115L1878.2 118.8L1873.2 127.5L1869.5 140L1862 142.5L1857 150L1852 160L1853.2 170L1855.8 175L1858.2 182.5L1857 190L1856.4 190L1853.1 199.1L1848.2 212.2L1841.6 220.5L1836.6 222.1L1834.7 222.9L1832.2 219.6L1830 212.2L1825.1 199.1L1821.8 190L1815.7 190L1811.9 192.5L1802 198.2L1795.4 195.8L1788.5 190L1787.2 189L1776 189L1776 262.5L1780.3 257.5L1786.9 250.9L1795.1 244.4L1801.7 241.1L1808.3 237.8L1809.9 229.5L1807.5 219.6L1809.1 209.8L1815.2 203.2L1817.4 206.5L1818.2 219.6L1821.5 227.9L1826.4 231.2L1833 229.5L1834.7 230.4L1841.2 233.2L1847.8 232L1854.4 228.7L1862.7 225.4L1869.2 227.6L1875.8 226.2L1874.2 216.4L1876.7 206.5L1882.4 202.4L1887.4 204.8L1884.1 196.6L1890.7 194.9L1892.3 190L1887 190L1905.8 186.2L1917 180ZM2024.1 427.5L2029 434.1L2034 437.4L2040.5 435.7L2047.1 432.4L2051.3 431.6L2050.4 429.1L2043.8 424.2L2034 422.5L2025.7 417.6L2020.8 409.4L2015.8 403.6L2010.9 404.4L2014.2 412.7L2017.5 420.9ZM1943.4 437.4L1950 448.9L1953.2 460.4L1958.2 470.3L1966.4 480.2L1974.7 490.1L1979.6 498.3L1984.5 506.5L1987.8 511.5L1997.7 510.7L2010.9 509.8L2019.4 507L2017.5 506.5L2007.6 503.2L1997.7 501.6L1989.5 503.2L1984.5 500L1982.9 490.1L1979.6 480.2L1973 471.9L1964.8 460.4L1958.2 450.5L1951.6 440.7L1946.7 430.8L1942.5 420.9L1941.7 412.3L1940.4 412.7L1939.2 415.9L1933.5 411L1929.4 405.2L1931.8 415.9L1936.8 425.8Z"/><path id="deep" d="M1928.5 335.8L1938.4 334.1L1948.3 332L1959.8 331.7L1971.4 334.1L1980.4 335L1981.2 328.4L1974.7 321.8L1966.4 316.8L1958.2 310.2L1953.2 305.3L1956.5 298.7L1951.6 297.1L1945 298.7L1943.4 303.7L1946.7 307.8L1941.7 311.9L1935.1 310.2L1931.8 305.3L1930.2 302L1923.6 305.3L1917 310.2L1912.1 316.8L1909.6 325.1L1911.2 333.3L1918.7 336.6ZM2012.5 330L2019.1 338.2L2020.8 348.1L2024.1 355L2020.8 355L2024.1 359.9L2032.3 363.2L2038.9 359.9L2040.5 355L2038.9 355L2040.5 344.8L2037.3 335L2030.7 326.7L2024.1 318.5L2025.7 308.6L2032.3 302L2034 292.9L2022.4 292.1L2014.2 297.1L2007.6 305.3L2004.3 311.9L2006 320.1ZM1793.5 361.6L1804.2 360.8L1808.2 359.6L1813.5 359.6L1815 359.8L1818.2 364.9L1816.5 373.1L1816.7 374L1816.5 375L1817 375L1818.2 379.7L1823.1 384.6L1833 387.9L1842.9 392.9L1851.1 397.8L1859.4 399.5L1865.9 392.9L1872.5 388.8L1882.4 389.6L1892.3 394.5L1903.8 396.2L1913.7 397.8L1922 395.4L1930.2 394.2L1940.1 394.5L1943.4 387.9L1946.7 378.1L1948.3 368.2L1949.1 362.4L1941.7 360.8L1931.8 362.4L1922 361.6L1913.7 359.9L1906.9 362.2L1903.8 359.1L1900.5 355L1902.2 350.1L1899.7 345.1L1900.5 341L1903.8 338.5L1900.5 336.1L1896.4 334.4L1892.3 335.2L1890.7 337.7L1887.4 336.1L1884.1 337.7L1880.8 339.4L1879.1 342.7L1880.8 347.6L1884.1 350.9L1886.5 355.8L1884.1 353.4L1880.8 354.2L1881.4 355L1870.7 355L1870.1 353.4L1871.7 352.5L1867.6 350.9L1868.4 347.6L1865.9 342.7L1863.5 339.4L1862.7 334.4L1860.2 329.5L1856.1 326.2L1851.1 322.9L1847 319.6L1842.9 315.5L1839.6 312.2L1834.7 309.7L1836.3 307.2L1833 304.8L1828.1 303.9L1829.7 306.4L1833 309.7L1834.7 313L1837.9 316.3L1840.4 319.6L1842.1 323.7L1844.5 327.8L1847.8 331.1L1851.1 334.4L1854.4 337.7L1857.7 341L1856.1 342.7L1852.8 341L1849.5 341.8L1847.8 344.3L1849.5 347.6L1848.7 350.9L1845.4 353.8L1844.2 355L1841.5 355L1842.9 353.4L1845.4 352.5L1847 349.2L1845.4 345.1L1842.9 341.8L1839.6 337.7L1834.7 334.4L1829.7 331.1L1824.8 325.4L1821.5 321.2L1817.4 317.9L1814.1 313.8L1809.9 312.2L1804.2 313.4L1795.9 315.5L1787.7 317.1L1781.9 319.6L1775.4 323.7L1775.4 361.6L1785.2 362.4ZM2068.5 448.9L2063.6 457.1L2057 462.1L2050.4 468.7L2043.8 473.6L2034 478.5L2024.1 483.5L2014.2 488.4L2004.3 493.4L1994.4 498.3L1988.7 503.2L1991.1 507.4L2007.6 509L2024.1 508.2L2025.7 513.1L2024.1 521.4L2131.1 521.4L2131.1 457.1L2122.9 453.8L2114.7 447.2L2106.4 437.4L2096.6 432.4L2083.4 432.4L2066.9 434.1L2057 432.4L2050.4 430.8L2057 437.4L2063.6 442.3Z"/><clipPath id="cl"><use href="#land"/></clipPath><clipPath id="cs"><use href="#deep"/></clipPath></defs><rect x="1073" y="50" width="1057" height="470" fill="#8ed3f1"/><g filter="url(#b10)" fill="#b7e2f6"><path d="M1400 0H1920V130L1870 160L1800 178L1760 205L1700 210L1640 178L1600 188L1560 172L1540 200L1500 172L1470 185L1450 230L1420 200Z" opacity="1"/><path d="M1440 60H1700V150L1640 165L1560 160L1500 150L1440 160Z" opacity="0.8"/><path d="M1640 200L1700 195L1705 235L1660 240Z" opacity="0.7"/><path d="M1690 245L1745 250L1772 290L1765 325L1720 305L1695 275Z" opacity="0.9"/><path d="M1570 190L1600 190L1605 300L1595 400L1600 520L1575 520L1580 400L1585 300Z" opacity="0.25"/><path d="M1440 270L1560 280L1560 335L1460 340Z" opacity="0.6"/><path d="M1640 430L1700 380L1740 360L1720 420L1690 470L1680 520L1650 520Z" opacity="0.35"/></g><g filter="url(#b6)" fill="#daf2fb"><path d="M1030 10H1440L1450 110L1440 170L1470 230L1440 260L1420 200H1030Z" opacity="1"/><path d="M1425 190L1450 200L1475 240L1490 270L1470 280L1440 250Z" opacity="0.9"/><path d="M1438 285L1480 268L1522 284L1548 300L1538 322L1500 332L1468 322L1440 312Z" opacity="1"/><path d="M1420 300L1470 310L1460 335L1415 345L1395 335Z" opacity="0.8"/><path d="M1470 20H1500L1498 120L1515 165L1540 190L1555 175L1590 110L1625 80L1660 20H1700L1650 100L1600 140L1560 200L1530 200L1495 170L1480 120Z" opacity="0.8"/><path d="M1668 125m-42 0a42 27 0 1 0 84 0a42 27 0 1 0 -84 0" opacity="0.75"/><path d="M1745 190L1800 178L1835 200L1815 250L1780 264L1760 255L1770 225Z" opacity="1"/><path d="M1760 185L1790 150L1830 105L1870 60L1900 10H2170V120H1930L1880 70L1840 120L1800 170Z" opacity="0.9"/><path d="M1705 215L1740 200L1750 260L1720 270L1700 250Z" opacity="0.8"/><path d="M1380 400L1400 395L1420 430L1430 455L1405 450L1385 425Z" opacity="0.55"/><path d="M1322 456m-18 0a18 11 0 1 0 36 0a18 11 0 1 0 -36 0" opacity="0.8"/><path d="M1343 405m-11 0a11 20 0 1 0 22 0a11 20 0 1 0 -22 0" opacity="0.7"/><path d="M1352 490m-17 0a17 11 0 1 0 34 0a17 11 0 1 0 -34 0" opacity="0.7"/><path d="M1265 400L1330 400L1335 415L1300 412L1275 425L1268 440L1258 420Z" opacity="0.8"/><path d="M1384 334L1398 340L1389 357L1388 371L1378 389L1366 405L1364 419L1370 436L1356 434L1348 415L1350 398L1362 382L1373 366L1374 352Z" opacity="0.9"/><path d="M1388 330L1440 298L1448 318L1412 342Z" opacity="0.8"/><path d="M1828 303L1840 305L1862 335L1858 345L1845 335Z" opacity="0.9"/><path d="M1880 338L1905 335L1908 365L1890 368L1884 352Z" opacity="0.7"/><path d="M1815 355L1840 362L1835 375L1815 372Z" opacity="0.6"/></g><g filter="url(#b6)" fill="#8ed3f1"><path d="M1725 62L1800 58L1792 100L1772 140L1722 138L1712 100Z" opacity="0.9"/><path d="M1470 175L1520 160L1560 210L1550 260L1510 270L1480 235Z" opacity="0.95"/><path d="M1455 110L1480 105L1482 150L1462 160Z" opacity="0.4"/></g><use href="#sea" fill="#daf2fb"/><path d="M1270 140L1440 140L1440 205L1410 215L1380 262L1340 262L1275 215Z" fill="#daf2fb"/><g filter="url(#b3)" fill="none" stroke="#daf2fb" stroke-linejoin="round"><use href="#land" stroke-width="7"/><use href="#ice" stroke-width="8"/></g><use href="#land" fill="#f3f1db" stroke="#b7c6c2" stroke-width=".7"/><g clip-path="url(#cl)"><g filter="url(#b6)" fill="#dfe8bd"><path d="M1060 78L1110 72L1150 95L1190 120L1230 150L1270 175L1300 195L1340 190L1380 200L1425 215L1440 260L1400 300L1380 330L1425 330L1430 350L1400 380L1370 420L1330 400L1290 400L1285 330L1290 280L1260 250L1225 240L1190 235L1170 250L1180 300L1190 340L1165 350L1140 372L1118 345L1110 300L1104 262L1082 225L1050 195Z" fill="#e3eac4"/><path d="M1385 200L1440 190L1470 230L1480 265L1440 275L1400 260Z" fill="#e3eac4"/><path d="M1425 275L1500 270L1500 320L1425 330Z" fill="#e3eac4"/><path d="M1210 400L1235 420L1260 455L1300 475L1340 490L1350 519L1300 519L1280 490L1240 470L1215 440Z" fill="#e3eac4"/><path d="M1330 445L1390 455L1430 468L1400 475L1340 462Z" fill="#e3eac4"/><path d="M1370 500L1440 495L1440 520L1370 520Z" fill="#e3eac4"/><path d="M1705 190L1780 190L1790 260L1760 270L1710 260Z"/><path d="M1780 50L2130 50L2130 250L2080 270L2040 250L2000 270L1960 262L1920 270L1900 300L1870 320L1840 330L1810 315L1790 300L1770 330L1745 320L1770 280L1790 240L1800 200L1820 150L1840 110Z"/><path d="M1720 320L1775 318L1770 350L1730 352Z"/><path d="M1915 335L1990 322L2020 335L2000 350L1930 352Z"/><path d="M1680 490L1780 488L1860 500L1960 505L2000 520L1680 520Z"/><path d="M2100 340L2130 330L2130 380L2110 380Z"/></g><g filter="url(#b6)" fill="#d0dca6" opacity=".5"><path d="M1095 130L1130 140L1160 180L1145 230L1120 250L1100 220Z"/><path d="M1112 250L1150 258L1172 300L1168 340L1148 345L1125 310Z"/><path d="M1168 275L1192 285L1198 320L1180 325Z"/><path d="M1300 240L1390 245L1410 290L1360 315L1310 295Z"/><path d="M1900 90L2050 110L2110 150L2120 220L2050 230L1960 200L1900 150Z"/><path d="M1800 120L1850 90L1870 130L1840 190L1810 200Z"/><path d="M1370 330L1410 330L1380 400L1340 400Z"/><path d="M1880 200L1960 215L1950 260L1880 250Z"/></g><g filter="url(#b6)" fill="#f3f1db" opacity=".9"><path d="M1175 245L1265 250L1285 290L1280 400L1230 410L1200 380L1195 300Z"/><path d="M1165 318L1196 322L1200 376L1172 372Z" opacity=".6"/><path d="M1285 315L1340 312L1356 330L1345 365L1300 372L1282 350Z" opacity=".9"/><path d="M2010 58L2135 52L2135 100L2060 106L2018 96Z" opacity=".85"/></g></g><g fill="none" stroke="#d0cdb8" stroke-width=".8"><polyline stroke="#b9b6a3" points="1136,277.4 1278,278 1282,279.5 1300,285 1318,288 1340,300 1352,312 1350,322"/><polyline points="1166,388 1180,392.5 1213,393.5 1222,400 1232,404 1240,407 1247,418 1258,426 1266,428"/><polyline points="1754.4,371.5 1756.1,384.6 1744.6,396.2 1734.7,404.4 1719.8,409.4 1719.8,420.1 1777.0,460.4"/><polyline points="1703.4,427.5 1719.8,426.7 1719.8,420.1"/><polyline points="1703.4,427.5 1696.8,440.7 1695.1,453.8 1677.0,453.8"/><polyline points="1731.4,432.4 1735.5,485.1 1705.0,485.9 1703.4,493.4"/><polyline points="1891.8,394.5 1891.8,449.7 1950.0,449.7"/><polyline points="1891.8,449.7 1890.7,460.4 1885.7,462.1"/><polyline points="1824.8,441.5 1840.4,444.8 1885.7,462.1"/><polyline points="1812.4,381.4 1816.5,401.1 1812.4,404.4 1813.2,432.4 1824.8,441.5 1777.0,463.7"/><polyline points="1840.4,444.8 1844.5,460.4 1842.9,486.8 1833.0,498.3"/><polyline points="1885.7,462.1 1884.9,481.8 1879.1,491.7 1875.8,503.2"/><polyline points="1941.7,394.5 1954.9,392.9 1979.6,404.4 1994.4,409.4 2007.6,411.0"/><polyline points="1991.1,364.9 1997.7,379.7 2007.6,396.2 2010.9,404.4"/><polyline points="1986.2,500.0 1984.5,476.9 2007.6,470.3 2030.7,462.1 2047.1,447.2 2040.5,437.4"/><polyline points="1777.0,470.3 1786.9,463.7 1809.9,453.8 1824.8,441.5"/></g><path d="M1125.5 110.6L1133 105L1143 101.2L1153 99.4L1156.8 101.2L1153 105L1158 106.9L1163 103.8L1164.9 108.8L1161.8 116.2L1154.2 118.1L1148 123.1L1144.2 126.9L1143 123.8L1135.5 125L1138 120L1140.5 115L1135.5 111.2L1129.2 112.5ZM1171.8 151.2L1176.8 153.8L1183 158.8L1190.5 156.2L1195.5 151.2L1201.8 148.8L1208.6 150L1203 153.8L1196.8 157.5L1191.8 162.5L1185.5 167.5L1180.5 170.6L1173 171.9L1165.5 167.5L1171.8 165.6L1178 161.2L1175.5 156.2ZM1199.2 186.2L1205.5 183.8L1214.2 184.4L1223 186.2L1214.2 188.1L1205.5 189.4L1198 190ZM1400 99.4L1402.5 100L1405 103.8L1410.6 107.5L1407.5 109.4L1402.5 110L1400.6 111.9L1399.8 106.2L1391.2 103.1L1391.5 102.2L1399.4 103.8ZM1917 165L1920.8 161.9L1925.8 165L1930.8 170L1932 175L1927 178.8L1923.2 180.6L1919.5 173.8ZM1938.2 151.2L1942 150L1945.8 156.2L1949.5 162.5L1950.1 167.5L1947 171.2L1942 165L1938.2 157.5ZM1293.7 293.8L1300.3 287.2L1310.2 284.7L1318.4 280.6L1325 283.9L1331.6 287.2L1330 292.1L1321.7 293.8L1315.1 292.9L1308.5 295.4L1302 295.4ZM1316.8 303.7L1321.7 298.7L1326.7 297.1L1328.3 303.7L1325 311.9L1323.4 321.8L1320.1 326.7L1316.8 321.8L1316 311.9ZM1334.9 295.4L1343.1 297.1L1353 302L1354.7 308.6L1349.7 311.9L1344.8 316.8L1341.5 311.9L1339.8 305.3L1334.9 302ZM1339.8 328.4L1349.7 323.4L1356.3 320.1L1358 321.8L1351.4 326.7L1343.1 330.8ZM1361.3 316.8L1369.5 315.2L1374.4 316L1369.5 319.3L1362.9 319.3ZM1259.1 236.1L1264.1 234.5L1267.4 242.7L1270.7 255.9L1272.3 265.8L1269.8 264.1L1267.4 255.9L1264.1 246L1259.1 241.1ZM1249.2 239.4L1254.2 237.8L1257.5 249.3L1262.4 262.5L1260.8 267.4L1257.5 259.2L1252.5 249.3ZM1241 199.9L1245.1 200.7L1242.7 208.1L1238.5 214.7L1236.9 213.1L1239.4 206.5ZM1309.4 268.2L1313.5 266.6L1315.1 272.4L1311.8 274.8ZM1198.2 190L1203.1 190L1199.8 194.1ZM2062 303.7L2066.9 302L2071.8 308.6L2070.2 315.2L2065.3 313.5L2062 308.6ZM2070.2 297.1L2073.5 295.4L2075.5 302L2072.7 304.5ZM1396.7 511.5L1400 510.7L1400.8 517.2L1397.5 518.1Z" fill="#bde3f6"/><use href="#ice" fill="#ffffff" stroke="#d9d4bd" stroke-width="1"/><g fill="#8a8a8a" stroke="#8a8a8a" stroke-width=".25" text-anchor="middle" opacity=".9"><text x="1251" y="230" font-size="10.5" letter-spacing="1.5" font-weight="normal">CANADA</text><text x="1257" y="346" font-size="10.5" letter-spacing="1.3" font-weight="normal">UNITED  STATES</text><text x="1242" y="443" font-size="9.5" letter-spacing="0.6" font-weight="normal">MÉXICO</text><text x="1766" y="419" font-size="9.5" letter-spacing="0.3" font-weight="normal">ALGERIA</text><text x="1856" y="425" font-size="9.5" letter-spacing="0.3" font-weight="normal">LIBYA</text><text x="1917" y="428" font-size="9.5" letter-spacing="0.3" font-weight="normal">EGYPT</text><text x="1985" y="432" font-size="9.5" letter-spacing="0.3" font-weight="normal">SAUDI ARABIA</text><text x="1914" y="481" font-size="9.5" letter-spacing="0.3" font-weight="normal">SUDAN</text><text x="1859" y="489" font-size="9.5" letter-spacing="0.3" font-weight="normal">CHAD</text><text x="1812" y="478" font-size="9.5" letter-spacing="0.3" font-weight="normal">NIGER</text><text x="1750" y="478" font-size="9.5" letter-spacing="0.3" font-weight="normal">MALI</text><text x="1808" y="514" font-size="9.5" letter-spacing="0.3" font-weight="normal">NIGERIA</text><text x="1947" y="351" font-size="9.5" letter-spacing="0.3" font-weight="normal">TURKEY</text><text x="1878" y="350" font-size="9.5" letter-spacing="0.3" font-weight="normal">GREECE</text><text x="1825" y="325" font-size="9.5" letter-spacing="0.3" font-weight="normal">ITALY</text><text x="1777" y="298" font-size="9.5" letter-spacing="0.3" font-weight="normal">FRANCE</text><text x="1745" y="348" font-size="9.5" letter-spacing="0.3" font-weight="normal">SPAIN</text><text x="1816" y="261" font-size="9.5" letter-spacing="0.3" font-weight="normal">GERMANY</text><text x="1862" y="249" font-size="9.5" letter-spacing="0.3" font-weight="normal">POLAND</text><text x="1922" y="279" font-size="9.5" letter-spacing="0.3" font-weight="normal">UKRAINE</text><text x="2120" y="284" font-size="9.5" letter-spacing="0.3" font-weight="normal">KAZAKHSTAN</text><text x="2044" y="391" font-size="9.5" letter-spacing="0.3" font-weight="normal">IRAN</text><text x="1809" y="169" font-size="9.5" letter-spacing="0.3" font-weight="normal">NORWAY</text><text x="1845" y="149" font-size="9.5" letter-spacing="0.3" font-weight="normal">SWEDEN</text><text x="1900" y="154" font-size="9.5" letter-spacing="0.3" font-weight="normal">FINLAND</text><text x="1745" y="227" font-size="9.5" letter-spacing="0.3" font-weight="normal">UNITED</text><text x="1745" y="237" font-size="9.5" letter-spacing="0.3" font-weight="normal">KINGDOM</text></g><g fill="#5f87b5" text-anchor="middle" font-style="italic" font-size="9.5" opacity=".9"><text x="1322" y="184" letter-spacing="0">Hudson Bay</text><text x="1467" y="140" letter-spacing="0">Davis Strait</text><text x="1797" y="100" letter-spacing="0">Norwegian Sea</text><text x="1548" y="411" letter-spacing="1" font-size="11">Atlantic</text><text x="1548" y="426" letter-spacing="1" font-size="11">Ocean</text><text x="1390" y="492" letter-spacing=".3">Caribbean Sea</text><text x="2075" y="486" letter-spacing="0">Arabian Sea</text><text x="1086" y="511" letter-spacing="1">cean</text></g><g fill="#3a3a3a" font-weight="bold" font-size="9.5" paint-order="stroke" stroke="#ffffff" stroke-opacity=".45" stroke-width="1.2" stroke-linejoin="round"><circle cx="1135.5" cy="275.5" r="1.7" fill="#fff" stroke="#444" stroke-opacity="1" stroke-width=".9" paint-order="normal"/><text x="1137" y="271">Vancouver</text><circle cx="1140" cy="356" r="1.7" fill="#fff" stroke="#444" stroke-opacity="1" stroke-width=".9" paint-order="normal"/><text x="1123" y="352">San Francisco</text><circle cx="1161" cy="379.5" r="1.7" fill="#fff" stroke="#444" stroke-opacity="1" stroke-width=".9" paint-order="normal"/><text x="1161" y="376">Los Angeles</text><circle cx="1258.5" cy="464" r="1.7" fill="#fff" stroke="#444" stroke-opacity="1" stroke-width=".9" paint-order="normal"/><text x="1258" y="459">Mexico City</text><circle cx="1317" cy="329.5" r="1.7" fill="#fff" stroke="#444" stroke-opacity="1" stroke-width=".9" paint-order="normal"/><text x="1317" y="325">Chicago</text><circle cx="1359" cy="317" r="1.7" fill="#fff" stroke="#444" stroke-opacity="1" stroke-width=".9" paint-order="normal"/><text x="1360" y="313">Toronto</text><circle cx="1385.5" cy="336.5" r="1.7" fill="#fff" stroke="#444" stroke-opacity="1" stroke-width=".9" paint-order="normal"/><text x="1387" y="333">New York</text><circle cx="1763" cy="257.5" r="1.7" fill="#fff" stroke="#444" stroke-opacity="1" stroke-width=".9" paint-order="normal"/><text x="1746" y="253">London</text><circle cx="1776" cy="279" r="1.7" fill="#fff" stroke="#444" stroke-opacity="1" stroke-width=".9" paint-order="normal"/><text x="1775" y="274">Paris</text><circle cx="1745" cy="345" r="1.7" fill="#fff" stroke="#444" stroke-opacity="1" stroke-width=".9" paint-order="normal"/><text x="1745" y="334">Madrid</text><circle cx="1811" cy="303.5" r="1.7" fill="#fff" stroke="#444" stroke-opacity="1" stroke-width=".9" paint-order="normal"/><text x="1811" y="299">Milan</text><circle cx="1860" cy="186" r="1.7" fill="#fff" stroke="#444" stroke-opacity="1" stroke-width=".9" paint-order="normal"/><text x="1864" y="182">Stockholm</text><circle cx="1871" cy="251.5" r="1.7" fill="#fff" stroke="#444" stroke-opacity="1" stroke-width=".9" paint-order="normal"/><text x="1875" y="258">Warsaw</text><circle cx="1955.5" cy="221" r="1.7" fill="#fff" stroke="#444" stroke-opacity="1" stroke-width=".9" paint-order="normal"/><text x="1957" y="216">Moscow</text><circle cx="1911.5" cy="334.5" r="1.7" fill="#fff" stroke="#444" stroke-opacity="1" stroke-width=".9" paint-order="normal"/><text x="1912" y="331">Istanbul</text><circle cx="1923" cy="403.5" r="1.7" fill="#fff" stroke="#444" stroke-opacity="1" stroke-width=".9" paint-order="normal"/><text x="1925" y="400">Cairo</text><circle cx="1991" cy="384" r="1.7" fill="#fff" stroke="#444" stroke-opacity="1" stroke-width=".9" paint-order="normal"/><text x="1981" y="380">Baghdad</text><circle cx="2046" cy="431.5" r="1.7" fill="#fff" stroke="#444" stroke-opacity="1" stroke-width=".9" paint-order="normal"/><text x="2047" y="428">Dubai</text></g><g fill="#c8c6e0"><circle cx="1323.7" cy="486.3" r="3.2"/><circle cx="1310.2" cy="493.4" r="3.2"/><circle cx="1689.9" cy="489.7" r="3.2"/><circle cx="1775" cy="517" r="3.2"/><circle cx="1946.7" cy="380.5" r="3.2"/><circle cx="2005.6" cy="408" r="3.2"/><circle cx="2108.9" cy="380.2" r="3.2"/></g><g fill="#f2495c"><circle cx="1275" cy="360" r="19"/><circle cx="1221" cy="217" r="5"/><circle cx="1666.8" cy="125" r="3.3"/><circle cx="1806" cy="174.5" r="3.5"/><circle cx="1858.5" cy="178.5" r="4"/><circle cx="1895" cy="160" r="3.6"/><circle cx="1746.2" cy="223.8" r="5"/><circle cx="1740.4" cy="234.1" r="3"/><circle cx="1721.8" cy="241" r="3.2"/><circle cx="1752.8" cy="275.3" r="3"/><circle cx="1774.2" cy="298.4" r="4"/><circle cx="1771.7" cy="324.2" r="3"/><circle cx="1744.5" cy="338.6" r="3.6"/><circle cx="1721.8" cy="345.7" r="3"/><circle cx="1240.7" cy="440.7" r="3"/><circle cx="1367" cy="451.9" r="3.2"/><circle cx="1353" cy="462.9" r="3.2"/><circle cx="1405.7" cy="467.3" r="3.2"/><circle cx="1423" cy="469.8" r="3.2"/><circle cx="1303.3" cy="483" r="3.2"/><circle cx="1329.1" cy="498.3" r="3.2"/><circle cx="1336.5" cy="514.4" r="3.2"/><circle cx="1351.4" cy="519.7" r="3.2"/><circle cx="1433.6" cy="390.1" r="3.2"/><circle cx="1442.3" cy="470.8" r="3.2"/><circle cx="1452.5" cy="489.2" r="3.2"/><circle cx="1451.4" cy="509.8" r="3.2"/><circle cx="1727.4" cy="393.4" r="3.2"/><circle cx="1772" cy="415.6" r="3.2"/><circle cx="1685.6" cy="495.3" r="3.2"/><circle cx="1837" cy="367.8" r="3.2"/><circle cx="1812.2" cy="380.9" r="3.2"/><circle cx="1933.8" cy="372.8" r="3.2"/><circle cx="1941.2" cy="397.8" r="3.2"/><circle cx="1948.3" cy="400.6" r="3"/><circle cx="1920.6" cy="422.5" r="3.2"/><circle cx="1986.4" cy="384.8" r="3.2"/><circle cx="2037.3" cy="389.6" r="3.2"/><circle cx="1993.4" cy="439.2" r="3.2"/><circle cx="2021.8" cy="427.1" r="3"/><circle cx="2024.6" cy="430.8" r="3"/><circle cx="2038.1" cy="441.5" r="3.2"/><circle cx="2117.3" cy="401.9" r="3.2"/><circle cx="1807.6" cy="518.1" r="3.2"/><circle cx="1970" cy="517.2" r="3.2"/><circle cx="1891.0" cy="193.6" r="3.1"/><circle cx="1889.0" cy="210.1" r="3.1"/><circle cx="1811.9" cy="215.9" r="3.1"/><circle cx="1885.2" cy="225.7" r="3.1"/><circle cx="1906.0" cy="238.6" r="3.1"/><circle cx="1861.0" cy="253.4" r="3.1"/><circle cx="1786.4" cy="264.9" r="3.1"/><circle cx="1794.8" cy="270.7" r="3.1"/><circle cx="1864.0" cy="279.8" r="3.1"/><circle cx="1837.6" cy="288.3" r="3.1"/><circle cx="1812.4" cy="290.8" r="3.1"/><circle cx="1805.3" cy="293.8" r="3.1"/><circle cx="1863.0" cy="291.0" r="3.1"/><circle cx="1840.1" cy="298.7" r="3.1"/><circle cx="1840.9" cy="306.3" r="3.1"/><circle cx="1891.0" cy="300.0" r="3.1"/><circle cx="1907.9" cy="289.2" r="3.1"/><circle cx="1922.3" cy="281.9" r="3.1"/><circle cx="1826.9" cy="314.5" r="3.1"/><circle cx="1853.6" cy="314.9" r="3.1"/><circle cx="1870.6" cy="313.9" r="3.1"/><circle cx="1862.3" cy="323.1" r="3.1"/><circle cx="1870.2" cy="323.8" r="3.1"/><circle cx="1893.3" cy="322.9" r="3.1"/><circle cx="1827.7" cy="328.9" r="3.1"/><circle cx="1866.3" cy="334.0" r="3.1"/><circle cx="1874.8" cy="347.8" r="3.1"/><circle cx="1984.5" cy="325.9" r="3.1"/><circle cx="1993.1" cy="340.9" r="3.1"/><circle cx="2006.1" cy="340.6" r="3.1"/><circle cx="2104.8" cy="284.7" r="3.1"/><circle cx="2092.8" cy="332.3" r="3.1"/><circle cx="1816.9" cy="259.7" r="6.5"/></g></svg>
</div>
<div class="panel" style="left:5px;top:531px;width:1058px;height:371px"><div class="title" style="top:12px">Top referrers</div><div class="th" style="letter-spacing:0.58px;left:18px;top:53.5px">Referrer Domain</div><div class="th r" style="letter-spacing:0.69px;margin-right:-0.69px;right:32px;top:53.5px">Number of Requests</div><div class="hl" style="left:10px;width:1023px;top:85px"></div><div class="hl" style="left:10px;width:1023px;top:130px"></div><div class="hl" style="left:10px;width:1023px;top:175px"></div><div class="hl" style="left:10px;width:1023px;top:220px"></div><div class="hl" style="left:10px;width:1023px;top:265px"></div><div class="hl" style="left:10px;width:1023px;top:310px"></div><div class="hl" style="left:10px;width:1023px;top:355px"></div><div class="vl" style="left:520px;top:51px;height:307px"></div><div class="td" style="letter-spacing:0.8px;left:18px;top:97.5px">news.ycombinator.com</div><div class="td r" style="letter-spacing:0.2px;margin-right:-.2px;right:32px;top:97.5px">8714</div><div class="td" style="letter-spacing:0.73px;left:18px;top:142.5px">reddit.com</div><div class="td r" style="letter-spacing:0.2px;margin-right:-.2px;right:32px;top:142.5px">555</div><div class="td" style="letter-spacing:0.93px;left:18px;top:187.5px">hckrnews.com</div><div class="td r" style="letter-spacing:0.2px;margin-right:-.2px;right:32px;top:187.5px">375</div><div class="td" style="letter-spacing:0.81px;left:18px;top:232.5px">google.co.uk</div><div class="td r" style="letter-spacing:0.2px;margin-right:-.2px;right:32px;top:232.5px">319</div><div class="td" style="letter-spacing:0.75px;left:18px;top:277.5px">google.com</div><div class="td r" style="letter-spacing:0.2px;margin-right:-.2px;right:32px;top:277.5px">271</div><div class="td" style="letter-spacing:0.76px;left:18px;top:322.5px">hackernews.betacat.io</div><div class="td r" style="letter-spacing:0.2px;margin-right:-.2px;right:32px;top:322.5px">220</div><div class="sbt" style="left:1033px;top:50px;width:13px;height:308px"></div><div class="sbh" style="left:1036.5px;top:66px;width:6.5px;height:91px"></div><svg class="abs" style="left:1033px;top:50px" width="13" height="308"><path d="M2.5 8.5L6.5 3.5L10.5 8.5Z M2.5 299.5L6.5 304.5L10.5 299.5Z" fill="#8b8d92"/></svg></div>
<div class="panel" style="left:1072px;top:531px;width:1059px;height:371px"><div class="title" style="top:12px">Top AS</div><div class="th" style="letter-spacing:0.61px;left:19px;top:53.5px">AS / Provider</div><div class="th r" style="letter-spacing:1.0px;margin-right:-1.0px;right:31px;top:53.5px">Zugriffe</div><div class="hl" style="left:10px;width:1024px;top:85px"></div><div class="hl" style="left:10px;width:1024px;top:130px"></div><div class="hl" style="left:10px;width:1024px;top:175px"></div><div class="hl" style="left:10px;width:1024px;top:220px"></div><div class="hl" style="left:10px;width:1024px;top:265px"></div><div class="hl" style="left:10px;width:1024px;top:310px"></div><div class="hl" style="left:10px;width:1024px;top:355px"></div><div class="vl" style="left:521px;top:51px;height:307px"></div><div class="td" style="letter-spacing:0.64px;left:19px;top:97.5px">COMCAST-7922</div><div class="td r" style="letter-spacing:0.2px;margin-right:-.2px;right:31px;top:97.5px">12852</div><div class="td" style="letter-spacing:0.24px;left:19px;top:142.5px">ATT-INTERNET4</div><div class="td r" style="letter-spacing:0.2px;margin-right:-.2px;right:31px;top:142.5px">7562</div><div class="td" style="letter-spacing:0.14px;left:19px;top:187.5px">UUNET</div><div class="td r" style="letter-spacing:0.2px;margin-right:-.2px;right:31px;top:187.5px">5934</div><div class="td" style="letter-spacing:0.64px;left:19px;top:232.5px">Deutsche Telekom AG</div><div class="td r" style="letter-spacing:0.2px;margin-right:-.2px;right:31px;top:232.5px">4640</div><div class="td" style="letter-spacing:-0.05px;left:19px;top:277.5px">CLOUDFLARENET</div><div class="td r" style="letter-spacing:0.2px;margin-right:-.2px;right:31px;top:277.5px">4362</div><div class="td" style="letter-spacing:0.47px;left:19px;top:322.5px">T-MOBILE-AS21928</div><div class="td r" style="letter-spacing:0.2px;margin-right:-.2px;right:31px;top:322.5px">3507</div><div class="sbt" style="left:1034px;top:50px;width:13px;height:308px"></div><div class="sbh" style="left:1037.5px;top:66px;width:6.5px;height:91px"></div><svg class="abs" style="left:1034px;top:50px" width="13" height="308"><path d="M2.5 8.5L6.5 3.5L10.5 8.5Z M2.5 299.5L6.5 304.5L10.5 299.5Z" fill="#8b8d92"/></svg></div>
<div class="panel" style="left:5px;top:911px;width:2126px;height:260px">
<div class="title" style="top:12px">Requested Pages</div>
<div class="abs" style="left:10px;top:48px;width:594px;height:200px;overflow:hidden">
<div class="hm" style="top:6.4px">/</div>
<div class="hm" style="top:19.0px">/category/freebsd/</div>
<div class="hm" style="top:31.5px">/freebsd-150-on-the-thinkpad-t480-efficient-stable-and-8-hours-on-battery/</div>
<div class="hm" style="top:44.1px">/immutable-linux-desktops-universal-blue-ostree-and-the-future-of-desktop-linux/</div>
<div class="hm" style="top:56.6px">/integrating-freebsd-15-with-freeipa-native-kerberos-and-ldap-authentication/</div>
<div class="hm" style="top:69.2px">/pf-firewall-on-freebsd-a-practical-guide/</div>
<div class="hm" style="top:81.8px">/robots.txt</div>
<div class="hm" style="top:94.3px">/running-a-factorio-headless-server-on-freebsd-with-the-linuxulator/</div>
<div class="hm" style="top:106.9px">/shell-tricks-that-actually-make-life-easier-and-save-your-sanity/</div>
<div class="hm" style="top:119.4px">/tag/activitypub/</div>
<div class="hm" style="top:132.0px">/tag/ci-cd/</div>
<div class="hm" style="top:144.6px">/tag/freebsd/index2.html</div>
<div class="hm" style="top:157.1px">/tag/illumos/</div>
</div>
<svg class="abs" style="left:610px;top:50px" width="1496" height="160" viewBox="616 962 1496 160"><g stroke="#2d3035" stroke-width="1" shape-rendering="crispEdges"><line x1="617" x2="2110.5" y1="973.5" y2="973.5"/><line x1="617" x2="2110.5" y1="986.5" y2="986.5"/><line x1="617" x2="2110.5" y1="999.5" y2="999.5"/><line x1="617" x2="2110.5" y1="1011.5" y2="1011.5"/><line x1="617" x2="2110.5" y1="1024.5" y2="1024.5"/><line x1="617" x2="2110.5" y1="1036.5" y2="1036.5"/><line x1="617" x2="2110.5" y1="1049.5" y2="1049.5"/><line x1="617" x2="2110.5" y1="1061.5" y2="1061.5"/><line x1="617" x2="2110.5" y1="1074.5" y2="1074.5"/><line x1="617" x2="2110.5" y1="1086.5" y2="1086.5"/><line x1="617" x2="2110.5" y1="1099.5" y2="1099.5"/><line x1="617" x2="2110.5" y1="1112.5" y2="1112.5"/><line x1="617" x2="2110.5" y1="1124.5" y2="1124.5"/></g><g stroke="#3a3d42" stroke-width="1" shape-rendering="crispEdges"><line x1="671.5" x2="671.5" y1="973" y2="1122"/><line x1="795.5" x2="795.5" y1="973" y2="1122"/><line x1="919.5" x2="919.5" y1="973" y2="1122"/><line x1="1043.5" x2="1043.5" y1="973" y2="1122"/><line x1="1167.5" x2="1167.5" y1="973" y2="1122"/><line x1="1291.5" x2="1291.5" y1="973" y2="1122"/><line x1="1415.5" x2="1415.5" y1="973" y2="1122"/><line x1="1539.5" x2="1539.5" y1="973" y2="1122"/><line x1="1663.5" x2="1663.5" y1="973" y2="1122"/><line x1="1787.5" x2="1787.5" y1="973" y2="1122"/><line x1="1911.5" x2="1911.5" y1="973" y2="1122"/><line x1="2035.5" x2="2035.5" y1="973" y2="1122"/></g><line x1="621" x2="2104" y1="973.4" y2="973.4" stroke="#553c8c" stroke-width="1.4" stroke-dasharray="2.8 0.7 1.7 1.0 3.2 2.0 3.7 0.8 2.2 0.7 1.5 1.6 0.9 1.0 2.9 1.7 1.5 1.8 3.4 0.6 3.4 2.0 1.9 0.9 3.9 1.3 1.1 0.8 3.5 1.8 3.4 2.1 2.5 2.5 2.0 1.7 3.5 1.8 3.6 1.8 3.1 0.7 1.5 1.2 1.1 1.1 1.1 1.2 2.8 1.3 2.0 1.0 1.7 2.5 2.9 1.8 1.3 2.1 1.3 1.4 4.0 1.9 2.6 2.0 3.5 2.2 1.5 0.7 1.8 1.1 1.5 2.5 3.6 1.2 2.9 1.4 3.7 1.5 1.6 1.1 2.6 1.1 2.7 2.4 2.1 1.0 4.0 1.6 1.1 0.7 1.2 1.9 3.3 1.4 1.0 1.4 4.0 1.7 3.9 2.3 0.8 2.0 3.0 1.7 1.7 1.9 1.2 1.5 2.3 2.5 3.6 1.1 2.4 1.0 3.7 2.3 1.8 1.9 2.7 0.9 3.2 1.7 3.3 1.7 0.8 1.2 0.9 2.5 3.6 2.3 1.8 0.7 3.6 2.5 1.1 1.6 1.0 2.1 3.3 0.9 2.3 1.7 1.6 2.3 2.2 1.0 2.5 2.1 1.4 1.2 4.0 1.9 2.2 1.6 1.2 1.0 1.9 1.8 1.5 1.0 1.0 1.9 1.5 2.4 3.6 0.7 1.6 1.9 1.5 0.9 3.8 1.7 2.3 2.2 3.4 1.0 1.1 1.5 2.2 1.5 3.1 1.9 3.9 0.8 2.1 1.3 3.6 1.1 1.4 1.5 2.2 1.2 1.6 2.4 2.2 2.3 2.6 0.7 4.0 2.3 3.9 2.5 3.5 0.9 2.4 1.0 2.1 0.7 2.0 2.6 1.6 2.2 2.3 1.4 3.9 2.6 2.6 2.0 1.3 1.2 3.9 1.8 2.5 2.1 1.0 1.8 2.4 2.3 1.3 2.5 1.1 1.0 2.7 2.0 1.6 0.8 3.6 1.1 2.7 1.8 2.1 1.8 2.5 2.5 1.5 2.0 1.6 1.4 2.9 1.2 1.8 2.1 1.0 1.5 4.0 2.6 1.0 1.0 1.6 2.5 3.6 2.4 2.0 0.9 3.5 2.0 2.8 2.6 2.9 0.6 3.4 1.2 2.9 2.5 1.2 0.8 1.1 1.7 1.7 1.8 3.1 1.0 2.8 1.1 2.4 2.4 3.5 0.8 2.2 1.2 0.8 2.1 2.8 1.1 3.2 1.7 2.2 0.6 1.0 2.4 3.7 1.7 3.5 1.8 1.3 0.9 1.8 2.4 3.3 2.3 3.7 1.0 1.6 0.8 3.3 2.4 2.1 1.8 1.3 2.5 3.6 2.6 3.4 2.4 0.9 2.1 1.9 2.5 3.4 2.3 3.4 1.1 3.3 0.8 3.6 2.3 1.5 2.2 2.3 1.2 3.3 1.1 0.9 1.0 1.9 2.3 3.9 1.2 2.9 1.4 3.9 1.7 3.8 0.8 3.9 1.0 3.9 1.1 1.1 1.5 3.1 1.2 2.7 1.6 2.0 1.8 1.6 2.0 0.8 2.5 2.5 2.0 3.2 1.9 2.0 0.7 2.9 1.3 1.8 2.3 3.1 1.2 1.8 1.4 2.1 1.2 1.2 1.4 3.8 2.0 3.7 1.8 1.8 1.7 0.8 1.2 2.2 1.8 2.9 1.5 2.2 1.0 2.3 2.4 3.3 0.9 1.1 1.6 2.8 1.3 3.4 2.1 3.0 1.0 1.4 0.6 1.6 1.6 3.5 0.7 2.1 1.9 1.4 2.0 2.4 1.1 2.9 0.6 3.2 2.1 1.1 1.5 1.4 2.5 2.5 0.7 1.6 2.3 2.3 2.2 2.9 2.6 2.7 2.5 3.7 1.8 3.1 1.6 3.5 1.7 3.7 2.1 2.3 1.1 1.6 1.9 3.3 1.6 2.8 1.1 1.0 1.2 1.7 1.2 2.5 0.9 1.5 2.0 3.1 0.7 2.1 1.7 2.1 1.0 2.1 2.4 2.7 2.0 3.5 2.1 2.0 0.6 1.9 2.1 3.5 2.5 2.1 2.1 2.5 1.8 1.5 1.0 2.2 0.7 1.9 2.0 2.1 0.9 2.3 0.9 2.8 0.7 2.1 1.7 0.9 1.9 1.2 1.5 1.0 1.4 1.5 1.3 3.2 1.4 3.2 2.3 1.6 0.8 0.9 1.7 4.0 1.3 2.9 2.2 2.9 2.1 3.8 1.0 0.9 0.9 1.2 1.9 2.6 1.0 3.0 2.1 1.3 1.8 3.2 0.8 3.4 2.5 1.1 0.7 1.8 2.0 3.9 1.4 3.1 0.8 3.0 1.9 1.1 2.1 3.5 1.8 1.2 2.6 3.3 1.3 2.2 1.3 2.4 1.3 3.5 2.2 1.1 2.5 2.8 2.3 3.1 1.5 3.1 2.5 1.7 2.2 2.5 1.6 2.2 2.1 1.7 2.3 3.5 0.8 3.6 1.1 2.3 1.8 2.0 0.7 3.5 1.0 1.5 2.2 1.9 2.4 3.0 1.2 0.8 2.5 1.1 2.0 2.4 2.1 3.0 1.9 2.4 2.2 1.1 1.0 3.0 1.2 2.7 1.5 2.5 1.5 3.2 1.3 3.0 1.1 1.6 0.8 1.4 0.8 2.5 2.1 1.4 1.0 2.3 2.0 3.9 1.6 1.7 0.8 1.4 1.1 1.4 0.6 2.5 1.1 3.9 1.7 3.0 0.9 3.6 1.6 3.6 1.7 2.3 1.5 1.4 0.7 3.8 1.6 3.4 1.4 1.0 1.9 1.0 0.9"/><line x1="621" x2="2104.5" y1="1044" y2="1044" stroke="#2c6496" stroke-width="1.6"/><line x1="621" x2="2104.5" y1="1044" y2="1044" stroke="#3b4f9a" stroke-width="1.6" stroke-dasharray="3.5 6.9 5.0 4.5 4.2 10.9 4.3 5.9 3.3 8.9 3.0 14.2 5.0 7.0 3.7 10.9 4.1 15.3 2.2 5.7 3.8 5.0 2.1 4.0 1.5 8.9 3.6 6.8 2.3 12.2 4.0 8.9 3.9 15.0 4.3 11.1 3.8 15.1 3.0 10.1 3.8 14.8 4.4 3.9 2.1 7.0 4.1 10.4 2.5 4.6 3.9 12.1 4.8 9.5 3.2 4.0 1.6 8.6 2.6 6.3 1.8 15.5 4.4 10.5 4.8 16.0 3.9 6.5 1.6 12.8 3.1 11.5 4.7 5.4 3.5 11.3 3.2 4.2 2.7 7.3 3.8 14.2 2.7 12.0 2.5 15.3 4.3 10.2 3.1 7.1 2.6 15.6 2.9 9.7 5.0 11.5 3.4 8.4 2.2 7.7 4.1 11.1 4.2 5.6 3.4 15.1 3.0 12.1 1.9 15.7 3.6 6.1 2.1 10.2 3.4 4.2 5.0 14.9 3.1 4.5 4.4 9.5 4.0 9.6 2.5 13.9 4.9 6.2 3.4 8.0 4.7 9.6 4.6 14.2 2.5 13.3 3.0 15.1 3.3 13.7 2.5 6.9 3.6 16.0 3.2 4.9 3.4 7.5 3.4 10.1 3.1 7.2 2.2 12.1 3.5 6.0 4.2 3.6 4.1 12.2 4.3 8.0 3.8 13.7 4.9 9.4 1.6 9.5 3.6 14.3 4.6 8.7 3.3 8.9 4.0 8.3 3.8 5.0 3.1 15.6 2.7 12.0 3.8 14.1 4.5 14.2 2.8 7.1 4.0 12.9 4.6 3.5 1.7 11.2 4.7 16.0 4.1 8.6 1.8 11.2 4.6 8.8 3.9 14.7 1.7 13.3 2.5 7.9 2.0 9.9 3.5 13.3 2.1 4.0 4.5 11.1 2.3 14.9 2.0 9.0"/><line x1="621" x2="2104.5" y1="1044" y2="1044" stroke="#2a8f8f" stroke-width="1.6" stroke-dasharray="2.1 8.6 1.5 18.5 3.8 16.2 1.9 12.0 2.4 14.6 3.1 11.6 2.1 19.2 2.0 10.9 2.7 8.3 2.9 14.3 4.0 9.3 3.9 15.8 2.2 14.2 3.2 17.4 1.6 14.9 2.7 20.3 2.2 18.4 3.0 10.3 3.1 15.2 3.2 17.0 3.1 19.1 3.1 20.3 3.1 9.6 2.6 14.4 3.3 5.6 2.2 17.5 1.9 6.4 2.8 21.5 2.8 20.4 3.6 8.6 3.6 12.7 3.5 17.4 2.3 6.1 3.9 6.5 3.9 19.5 3.3 21.6 3.9 18.5 2.4 18.2 1.5 13.7 2.6 16.1 3.2 14.5 3.6 20.9 1.8 8.2 1.6 19.9 2.9 20.5 2.1 5.1 3.6 20.4 2.3 11.3 1.8 21.0 2.3 12.9 1.7 20.0 1.8 12.2 3.2 17.4 3.9 11.5 3.4 6.8 2.5 5.8 2.7 11.3 3.9 4.6 2.4 12.0 3.9 19.4 1.7 16.3 2.9 21.6 2.4 11.2 2.0 6.2 3.6 12.2 3.2 15.6 3.0 4.4 3.5 8.4 1.8 14.2 1.7 17.8 2.0 7.9 3.7 9.9 1.9 20.2 1.5 19.5 1.9 6.3 2.1 7.1 3.2 4.5 1.5 18.2 2.1 9.8 1.9 4.9 3.4 13.5 3.4 12.6 3.4 13.2 1.8 13.1 3.9 4.8 3.5 19.6 2.8 12.2 3.9 5.1 2.7 11.2 3.2 12.8"/><line x1="621" x2="2104.5" y1="1044" y2="1044" stroke="#49308a" stroke-width="1.6" stroke-dasharray="2.8 13.7 1.2 40.4 1.1 23.8 2.3 37.4 1.7 59.7 2.1 32.7 2.2 15.0 2.4 52.6 2.3 48.4 2.4 20.8 1.9 21.4 1.7 32.7 1.8 14.8 1.9 43.3 1.7 17.6 2.8 13.4 2.7 14.7 1.2 46.9 2.6 37.8 2.2 38.1 1.7 16.1 1.7 43.3 2.5 53.4 2.4 58.4 2.2 27.6 2.2 20.6 2.3 21.2 1.2 52.3 1.7 48.1 2.1 50.4 2.7 58.7 2.6 40.7 2.3 11.3 2.9 51.5 1.5 19.0 2.4 25.4 1.7 10.3 2.7 38.3 1.8 17.1 2.3 11.5"/><line x1="621" x2="2104.5" y1="1074" y2="1074" stroke="#22917f" stroke-width="1.6"/><line x1="621" x2="2104.5" y1="1074" y2="1074" stroke="#2f7fa0" stroke-width="1.6" stroke-dasharray="4.1 7.9 3.0 10.1 2.8 17.0 4.2 14.2 1.8 4.9 2.1 15.1 3.9 8.9 3.8 12.7 3.0 8.9 4.1 6.0 3.0 9.1 3.9 12.8 3.8 4.8 2.9 14.8 1.5 9.4 2.2 6.5 2.4 9.9 1.5 17.4 2.1 10.8 4.0 13.0 4.4 18.5 1.8 19.5 1.6 4.3 4.7 19.5 3.5 14.3 4.0 11.5 1.9 4.4 2.6 18.4 3.7 19.0 4.7 5.6 4.5 8.4 3.6 13.4 2.9 9.6 2.7 10.0 2.1 13.2 1.9 13.2 4.7 10.3 4.0 18.7 4.4 8.3 2.0 7.6 3.6 17.7 3.8 7.2 4.2 12.9 4.1 17.7 3.1 20.6 3.5 15.4 3.7 19.6 3.7 6.7 1.7 12.0 2.6 8.9 1.7 13.1 2.6 12.1 1.7 19.0 1.8 19.6 4.5 15.1 3.3 12.3 3.4 18.3 4.6 12.1 4.3 15.7 2.6 12.6 2.0 5.1 1.9 20.2 2.7 16.9 3.3 7.1 2.4 11.9 3.0 13.4 2.1 10.7 2.5 11.4 2.7 14.8 4.3 15.7 1.7 5.7 3.9 9.1 4.0 15.8 4.7 19.7 2.7 14.5 2.0 10.3 4.9 16.6 2.9 14.7 4.8 9.6 2.8 18.2 4.3 16.1 4.4 17.3 3.9 13.5 3.8 11.6 2.8 10.5 2.1 7.9 4.8 12.8 2.3 6.5 1.8 19.2 1.9 17.9"/><line x1="621" x2="2104.5" y1="1074" y2="1074" stroke="#3fb574" stroke-width="1.6" stroke-dasharray="4.4 19.9 1.6 10.1 4.2 6.4 2.8 6.9 4.4 17.9 4.3 7.0 3.0 11.4 3.9 8.3 3.1 9.1 4.1 12.1 3.4 9.6 4.3 12.4 4.4 10.6 4.8 21.7 3.1 9.1 2.8 13.5 4.9 18.7 4.3 6.5 2.4 15.5 4.6 14.0 1.9 19.2 4.5 9.1 4.2 8.9 4.7 6.7 3.0 21.0 2.3 12.1 2.7 4.5 1.7 13.0 2.3 21.9 2.8 4.5 4.8 19.1 3.8 18.2 2.0 9.2 4.4 16.5 2.0 16.7 3.1 4.1 1.8 8.6 4.4 13.9 4.0 13.5 1.9 9.2 2.6 4.9 3.0 18.3 3.1 6.0 4.7 14.7 1.6 13.3 2.3 6.6 3.0 15.1 2.3 11.5 3.8 5.5 4.9 5.2 3.3 13.1 5.0 14.0 2.9 12.5 3.7 21.7 2.4 4.3 4.3 10.2 4.1 15.3 4.2 17.2 2.7 4.8 3.4 18.6 2.1 18.0 3.1 16.5 3.7 18.6 1.7 18.0 3.1 9.3 1.7 7.6 1.6 20.8 3.3 21.8 3.4 8.6 4.1 7.4 2.7 18.1 4.5 10.0 1.9 10.6 4.6 17.4 4.6 11.0 4.9 12.9 3.2 20.6 3.3 18.4 4.0 5.4 3.6 18.8 3.4 9.8 1.8 15.9 2.6 14.8 3.0 16.4 2.7 4.8 4.5 10.3 5.0 8.9 4.9 21.1 1.8 15.5 2.8 18.4"/><line x1="621" x2="2104.5" y1="1074" y2="1074" stroke="#8fd044" stroke-width="1.6" stroke-dasharray="2.4 67.6 1.3 50.4 2.6 21.7 1.1 58.9 1.7 39.1 2.1 50.3 2.4 67.4 1.7 58.2 2.1 46.5 1.8 52.5 1.5 25.7 2.5 45.0 1.8 48.1 1.5 33.0 1.9 69.8 1.6 65.8 2.0 26.1 2.7 42.6 2.8 42.3 1.2 54.1 2.7 36.0 1.7 23.2 2.1 64.6 2.7 55.6 2.9 51.9 2.6 45.4 1.2 30.0 1.3 59.5 1.1 47.7 1.7 60.2"/><line x1="621" x2="2104.5" y1="1074" y2="1074" stroke="#e8c32a" stroke-width="1.6" stroke-dasharray="1.8 133.4 1.1 97.1 2.5 146.3 1.8 152.3 2.2 68.9 2.5 137.1 1.7 141.6 1.5 165.4 2.2 136.8 1.3 176.0 1.6 169.3 1.1 74.9"/><path d="M847.9 977.0h1.1v1.9h-1.1zM861.2 977.0h1.1v1.9h-1.1zM1134.2 980.0h1.1v1.9h-1.1zM1948.2 977.0h1.1v1.9h-1.1zM992.6 980.0h1.1v1.9h-1.1zM1028.0 977.0h1.1v1.9h-1.1zM1532.2 977.0h1.1v1.9h-1.1zM1366.3 977.0h1.1v1.9h-1.1zM1498.7 980.0h1.1v1.9h-1.1zM849.7 980.0h1.1v1.9h-1.1zM1689.7 980.0h1.1v1.9h-1.1zM1121.7 980.0h1.1v1.9h-1.1zM682.1 977.0h1.1v1.9h-1.1zM741.5 980.0h1.1v1.9h-1.1zM1013.5 977.0h1.1v1.9h-1.1zM1758.4 979.5h1.1v1.9h-1.1zM1537.7 977.0h1.1v1.9h-1.1zM1359.6 980.0h1.1v1.9h-1.1zM1050.6 977.0h1.1v1.9h-1.1zM1337.2 979.5h1.1v1.9h-1.1zM1062.1 977.0h1.1v1.9h-1.1zM1642.2 977.0h1.1v1.9h-1.1zM1272.9 979.5h1.1v1.9h-1.1zM1309.8 977.0h1.1v1.9h-1.1zM1520.7 977.0h1.1v1.9h-1.1zM1898.6 977.0h1.1v1.9h-1.1zM1709.8 977.0h1.1v1.9h-1.1zM2067.5 977.0h1.1v1.9h-1.1zM1749.1 980.0h1.1v1.9h-1.1zM1453.9 977.0h1.1v1.9h-1.1zM979.5 977.0h1.1v1.9h-1.1zM1017.7 977.0h1.1v1.9h-1.1zM829.9 977.0h1.1v1.9h-1.1zM1051.4 979.5h1.1v1.9h-1.1zM1902.6 979.5h1.1v1.9h-1.1zM989.2 977.0h1.1v1.9h-1.1zM1827.4 980.0h1.1v1.9h-1.1zM1690.4 977.0h1.1v1.9h-1.1zM1752.7 979.5h1.1v1.9h-1.1zM2098.0 979.5h1.1v1.9h-1.1zM1360.7 977.0h1.1v1.9h-1.1zM1358.6 977.0h1.1v1.9h-1.1zM2022.8 980.0h1.1v1.9h-1.1zM1299.1 977.0h1.1v1.9h-1.1zM940.1 977.0h1.1v1.9h-1.1zM693.2 977.0h1.1v1.9h-1.1zM1354.9 979.5h1.1v1.9h-1.1zM1044.8 977.0h1.1v1.9h-1.1zM1877.4 979.5h1.1v1.9h-1.1zM819.6 977.0h1.1v1.9h-1.1zM1699.9 979.5h1.1v1.9h-1.1zM1163.7 979.5h1.1v1.9h-1.1zM696.9 980.0h1.1v1.9h-1.1zM909.7 980.0h1.1v1.9h-1.1zM1049.0 979.5h1.1v1.9h-1.1zM1368.8 980.0h1.1v1.9h-1.1zM1035.8 980.0h1.1v1.9h-1.1zM1630.0 977.0h1.1v1.9h-1.1zM811.8 977.0h1.1v1.9h-1.1zM1205.2 977.0h1.1v1.9h-1.1zM1448.3 977.0h1.1v1.9h-1.1zM1740.6 977.0h1.1v1.9h-1.1zM1514.5 979.5h1.1v1.9h-1.1zM1362.6 977.0h1.1v1.9h-1.1zM678.7 977.0h1.1v1.9h-1.1zM1813.3 980.0h1.1v1.9h-1.1zM1298.7 980.0h1.1v1.9h-1.1zM1945.5 977.0h1.1v1.9h-1.1zM1107.4 980.0h1.1v1.9h-1.1zM1093.4 979.5h1.1v1.9h-1.1zM2090.1 977.0h1.1v1.9h-1.1zM1501.5 980.0h1.1v1.9h-1.1zM1849.4 980.0h1.1v1.9h-1.1zM1347.4 980.0h1.1v1.9h-1.1zM1065.6 977.0h1.1v1.9h-1.1zM1167.3 977.0h1.1v1.9h-1.1zM2074.2 980.0h1.1v1.9h-1.1zM1077.3 977.0h1.1v1.9h-1.1zM1506.2 977.0h1.1v1.9h-1.1zM2055.2 980.0h1.1v1.9h-1.1zM1477.6 977.0h1.1v1.9h-1.1zM1486.4 977.0h1.1v1.9h-1.1zM1398.4 980.0h1.1v1.9h-1.1zM1769.7 979.5h1.1v1.9h-1.1zM840.2 977.0h1.1v1.9h-1.1zM667.8 977.0h1.1v1.9h-1.1zM903.9 979.5h1.1v1.9h-1.1zM1086.2 977.0h1.1v1.9h-1.1zM1233.4 977.0h1.1v1.9h-1.1zM1229.6 980.0h1.1v1.9h-1.1zM1986.1 977.0h1.1v1.9h-1.1zM1667.7 980.0h1.1v1.9h-1.1zM928.5 977.0h1.1v1.9h-1.1zM2101.2 979.5h1.1v1.9h-1.1zM1400.3 977.0h1.1v1.9h-1.1zM2039.8 979.5h1.1v1.9h-1.1zM1973.7 977.0h1.1v1.9h-1.1zM1431.1 977.0h1.1v1.9h-1.1zM1525.7 977.0h1.1v1.9h-1.1zM2040.7 977.0h1.1v1.9h-1.1zM1448.6 977.0h1.1v1.9h-1.1zM2017.2 977.0h1.1v1.9h-1.1zM1764.7 977.0h1.1v1.9h-1.1zM1644.6 979.5h1.1v1.9h-1.1zM1091.2 977.0h1.1v1.9h-1.1zM1452.2 977.0h1.1v1.9h-1.1zM1047.8 980.0h1.1v1.9h-1.1zM1624.4 979.5h1.1v1.9h-1.1zM1949.4 979.5h1.1v1.9h-1.1zM1834.7 977.0h1.1v1.9h-1.1zM1051.7 977.0h1.1v1.9h-1.1zM2037.7 977.0h1.1v1.9h-1.1zM1134.7 979.5h1.1v1.9h-1.1zM1593.8 979.5h1.1v1.9h-1.1zM938.3 980.0h1.1v1.9h-1.1zM1023.1 980.0h1.1v1.9h-1.1zM1653.4 977.0h1.1v1.9h-1.1zM783.0 980.0h1.1v1.9h-1.1zM975.9 977.0h1.1v1.9h-1.1zM1614.4 980.0h1.1v1.9h-1.1zM955.7 977.0h1.1v1.9h-1.1zM698.8 979.5h1.1v1.9h-1.1zM1110.8 979.5h1.1v1.9h-1.1zM770.1 977.0h1.1v1.9h-1.1zM628.7 980.0h1.1v1.9h-1.1zM2071.2 977.0h1.1v1.9h-1.1zM1224.4 979.5h1.1v1.9h-1.1zM1329.1 977.0h1.1v1.9h-1.1zM1742.0 977.0h1.1v1.9h-1.1zM1097.3 977.0h1.1v1.9h-1.1zM1967.5 977.0h1.1v1.9h-1.1zM1588.4 977.0h1.1v1.9h-1.1zM1414.6 977.0h1.1v1.9h-1.1zM1975.3 977.0h1.1v1.9h-1.1zM1240.7 977.0h1.1v1.9h-1.1zM2006.0 977.0h1.1v1.9h-1.1zM2099.8 979.5h1.1v1.9h-1.1zM1789.5 977.0h1.1v1.9h-1.1zM2010.0 977.0h1.1v1.9h-1.1zM1921.2 977.0h1.1v1.9h-1.1zM1063.5 980.0h1.1v1.9h-1.1zM780.1 977.0h1.1v1.9h-1.1zM1043.0 980.0h1.1v1.9h-1.1zM1398.6 977.0h1.1v1.9h-1.1zM1883.1 979.5h1.1v1.9h-1.1zM1025.6 977.0h1.1v1.9h-1.1zM1111.4 979.5h1.1v1.9h-1.1zM1582.4 977.0h1.1v1.9h-1.1zM641.9 977.0h1.1v1.9h-1.1zM1793.7 980.0h1.1v1.9h-1.1zM1621.1 1048.0h1.1v1.9h-1.1zM881.3 1048.5h1.1v1.9h-1.1zM1951.3 1048.0h1.1v1.9h-1.1zM1385.2 1048.0h1.1v1.9h-1.1zM1215.4 1048.0h1.1v1.9h-1.1zM895.0 1048.0h1.1v1.9h-1.1zM1329.1 1048.0h1.1v1.9h-1.1zM631.1 1048.0h1.1v1.9h-1.1zM970.3 1048.0h1.1v1.9h-1.1zM2035.8 1048.0h1.1v1.9h-1.1zM1484.8 1048.5h1.1v1.9h-1.1zM638.0 1048.5h1.1v1.9h-1.1zM1154.2 1048.0h1.1v1.9h-1.1zM713.1 1048.0h1.1v1.9h-1.1zM1311.2 1048.0h1.1v1.9h-1.1zM1222.2 1048.5h1.1v1.9h-1.1zM1990.0 1048.5h1.1v1.9h-1.1zM1762.7 1048.5h1.1v1.9h-1.1zM795.1 1048.0h1.1v1.9h-1.1zM1166.1 1048.0h1.1v1.9h-1.1zM946.0 1048.0h1.1v1.9h-1.1zM1330.1 1048.0h1.1v1.9h-1.1zM1729.9 1048.5h1.1v1.9h-1.1zM1175.1 1048.5h1.1v1.9h-1.1zM1435.5 1048.0h1.1v1.9h-1.1zM1744.2 1048.5h1.1v1.9h-1.1zM1845.4 1048.0h1.1v1.9h-1.1zM1629.9 1048.5h1.1v1.9h-1.1zM1915.9 1048.0h1.1v1.9h-1.1zM1400.3 1048.5h1.1v1.9h-1.1zM1664.7 1048.0h1.1v1.9h-1.1zM1981.3 1048.0h1.1v1.9h-1.1zM712.6 1048.5h1.1v1.9h-1.1zM1960.0 1048.0h1.1v1.9h-1.1zM1470.3 1048.0h1.1v1.9h-1.1zM865.0 1048.5h1.1v1.9h-1.1zM1276.2 1048.5h1.1v1.9h-1.1zM925.6 1048.5h1.1v1.9h-1.1zM1345.9 1048.5h1.1v1.9h-1.1zM1281.7 1048.0h1.1v1.9h-1.1zM1293.4 1048.5h1.1v1.9h-1.1zM1237.1 1048.5h1.1v1.9h-1.1zM706.6 1048.0h1.1v1.9h-1.1zM1618.7 1048.0h1.1v1.9h-1.1zM1693.6 1048.0h1.1v1.9h-1.1zM998.4 1048.0h1.1v1.9h-1.1zM1727.0 1048.5h1.1v1.9h-1.1zM729.3 1048.0h1.1v1.9h-1.1zM1131.9 1048.0h1.1v1.9h-1.1zM1423.5 1048.0h1.1v1.9h-1.1zM2007.0 1048.0h1.1v1.9h-1.1zM2083.4 1048.0h1.1v1.9h-1.1zM668.1 1048.0h1.1v1.9h-1.1zM887.9 1048.0h1.1v1.9h-1.1zM1756.7 1048.5h1.1v1.9h-1.1zM1578.8 1048.0h1.1v1.9h-1.1zM1176.3 1048.0h1.1v1.9h-1.1zM1286.2 1048.0h1.1v1.9h-1.1zM1178.1 1048.5h1.1v1.9h-1.1zM2050.8 1048.5h1.1v1.9h-1.1zM818.2 1048.0h1.1v1.9h-1.1zM796.9 1048.5h1.1v1.9h-1.1zM1203.9 1048.0h1.1v1.9h-1.1zM1700.4 1048.0h1.1v1.9h-1.1zM1859.0 1048.0h1.1v1.9h-1.1zM2072.1 1048.0h1.1v1.9h-1.1zM1619.8 1048.5h1.1v1.9h-1.1zM1250.0 1048.0h1.1v1.9h-1.1zM1842.0 1048.0h1.1v1.9h-1.1zM1304.1 1048.0h1.1v1.9h-1.1zM1029.8 1048.5h1.1v1.9h-1.1zM1756.2 1048.0h1.1v1.9h-1.1zM1821.5 1048.0h1.1v1.9h-1.1zM1532.9 1048.0h1.1v1.9h-1.1zM977.9 1048.0h1.1v1.9h-1.1zM770.6 1048.0h1.1v1.9h-1.1zM1283.1 1048.5h1.1v1.9h-1.1zM1664.0 1048.0h1.1v1.9h-1.1zM983.9 1048.0h1.1v1.9h-1.1zM1217.6 1048.0h1.1v1.9h-1.1zM1421.5 1048.0h1.1v1.9h-1.1zM828.8 1048.0h1.1v1.9h-1.1zM968.3 1048.5h1.1v1.9h-1.1zM1475.4 1048.5h1.1v1.9h-1.1zM1507.7 1048.5h1.1v1.9h-1.1zM1834.7 1048.0h1.1v1.9h-1.1zM1068.5 1048.0h1.1v1.9h-1.1zM2082.8 1048.5h1.1v1.9h-1.1zM948.8 1048.0h1.1v1.9h-1.1zM1029.1 1048.5h1.1v1.9h-1.1zM2067.2 1083.0h1.1v1.9h-1.1zM2018.1 1083.0h1.1v1.9h-1.1zM2040.9 1083.0h1.1v1.9h-1.1zM1837.0 1083.0h1.1v1.9h-1.1zM1695.0 1083.0h1.1v1.9h-1.1zM1743.9 1083.0h1.1v1.9h-1.1zM2084.2 1083.0h1.1v1.9h-1.1zM2062.3 1083.0h1.1v1.9h-1.1zM1869.3 1083.0h1.1v1.9h-1.1zM1951.1 1083.0h1.1v1.9h-1.1zM1617.6 1083.0h1.1v1.9h-1.1zM1687.3 1083.0h1.1v1.9h-1.1zM1496.5 1083.0h1.1v1.9h-1.1zM1658.8 1083.0h1.1v1.9h-1.1zM1928.7 1083.0h1.1v1.9h-1.1zM1728.1 1083.0h1.1v1.9h-1.1zM1996.4 1083.0h1.1v1.9h-1.1zM1604.7 1083.0h1.1v1.9h-1.1zM1895.2 1083.0h1.1v1.9h-1.1zM1965.3 1083.0h1.1v1.9h-1.1zM2043.1 1083.0h1.1v1.9h-1.1zM1791.5 1083.0h1.1v1.9h-1.1zM2081.0 1083.0h1.1v1.9h-1.1zM1787.9 1083.0h1.1v1.9h-1.1zM1485.7 1083.0h1.1v1.9h-1.1zM1563.4 1083.0h1.1v1.9h-1.1zM1535.2 1083.0h1.1v1.9h-1.1zM1851.7 1083.0h1.1v1.9h-1.1zM2048.5 1083.0h1.1v1.9h-1.1zM1994.9 1083.0h1.1v1.9h-1.1zM1456.0 1083.0h1.1v1.9h-1.1zM1907.4 1083.0h1.1v1.9h-1.1zM1526.0 1083.0h1.1v1.9h-1.1zM1581.7 1083.0h1.1v1.9h-1.1zM1871.0 1083.0h1.1v1.9h-1.1zM1820.5 1083.0h1.1v1.9h-1.1zM2013.8 1083.0h1.1v1.9h-1.1zM1524.3 1083.0h1.1v1.9h-1.1zM1933.9 1083.0h1.1v1.9h-1.1zM1907.2 1083.0h1.1v1.9h-1.1zM1789.0 1083.0h1.1v1.9h-1.1zM1732.3 1083.0h1.1v1.9h-1.1zM2010.8 1083.0h1.1v1.9h-1.1zM1627.7 1083.0h1.1v1.9h-1.1zM2073.3 1083.0h1.1v1.9h-1.1zM1400.9 1083.0h1.1v1.9h-1.1zM2059.1 1083.0h1.1v1.9h-1.1zM2076.9 1083.0h1.1v1.9h-1.1zM1473.8 1083.0h1.1v1.9h-1.1zM2103.7 1083.0h1.1v1.9h-1.1zM1731.9 1083.0h1.1v1.9h-1.1zM1563.2 1083.0h1.1v1.9h-1.1zM1821.5 1083.0h1.1v1.9h-1.1zM1536.0 1083.0h1.1v1.9h-1.1zM2043.4 1083.0h1.1v1.9h-1.1zM1784.2 1083.0h1.1v1.9h-1.1zM1943.7 1083.0h1.1v1.9h-1.1zM1661.8 1083.0h1.1v1.9h-1.1zM1771.0 1083.0h1.1v1.9h-1.1zM1646.5 1083.0h1.1v1.9h-1.1zM1576.8 1083.0h1.1v1.9h-1.1zM1756.2 1083.0h1.1v1.9h-1.1zM1745.1 1083.0h1.1v1.9h-1.1zM1460.4 1083.0h1.1v1.9h-1.1zM2090.7 1083.0h1.1v1.9h-1.1zM1725.2 1083.0h1.1v1.9h-1.1zM1989.6 1083.0h1.1v1.9h-1.1zM2042.8 1083.0h1.1v1.9h-1.1zM1654.7 1083.0h1.1v1.9h-1.1zM1685.5 1083.0h1.1v1.9h-1.1zM1791.6 1083.0h1.1v1.9h-1.1zM1548.0 1083.0h1.1v1.9h-1.1zM1494.2 1083.0h1.1v1.9h-1.1zM1576.2 1083.0h1.1v1.9h-1.1zM2057.4 1083.0h1.1v1.9h-1.1zM1803.5 1083.0h1.1v1.9h-1.1zM1688.2 1083.0h1.1v1.9h-1.1zM1498.8 1083.0h1.1v1.9h-1.1zM1625.5 1083.0h1.1v1.9h-1.1zM1661.2 1083.0h1.1v1.9h-1.1zM1985.0 1083.0h1.1v1.9h-1.1zM1746.5 1083.0h1.1v1.9h-1.1zM1857.4 1083.0h1.1v1.9h-1.1zM1879.0 1083.0h1.1v1.9h-1.1zM1573.7 1083.0h1.1v1.9h-1.1zM1976.6 1083.0h1.1v1.9h-1.1zM2080.1 1083.0h1.1v1.9h-1.1zM1848.2 1083.0h1.1v1.9h-1.1zM1740.3 1083.0h1.1v1.9h-1.1zM1510.1 1083.0h1.1v1.9h-1.1zM1957.6 1083.0h1.1v1.9h-1.1zM1510.9 1083.0h1.1v1.9h-1.1zM1904.3 1083.0h1.1v1.9h-1.1zM1738.7 1083.0h1.1v1.9h-1.1zM2044.7 1083.0h1.1v1.9h-1.1zM1777.1 1083.0h1.1v1.9h-1.1zM1848.3 1083.0h1.1v1.9h-1.1zM1431.9 1083.0h1.1v1.9h-1.1zM1414.2 1083.0h1.1v1.9h-1.1zM1994.5 1083.0h1.1v1.9h-1.1zM2064.9 1083.0h1.1v1.9h-1.1zM1867.1 1083.0h1.1v1.9h-1.1zM1935.7 1083.0h1.1v1.9h-1.1zM1684.4 1083.0h1.1v1.9h-1.1zM1991.6 1083.0h1.1v1.9h-1.1zM1555.2 1083.0h1.1v1.9h-1.1zM1894.9 1083.0h1.1v1.9h-1.1zM1396.5 1083.0h1.1v1.9h-1.1zM1751.1 1083.0h1.1v1.9h-1.1zM1656.5 1083.0h1.1v1.9h-1.1zM1831.1 1083.0h1.1v1.9h-1.1zM1866.1 1083.0h1.1v1.9h-1.1zM1830.2 1083.0h1.1v1.9h-1.1zM1735.0 1083.0h1.1v1.9h-1.1zM1738.3 1083.0h1.1v1.9h-1.1zM1394.7 1083.0h1.1v1.9h-1.1zM1783.9 1083.0h1.1v1.9h-1.1zM1398.5 1083.0h1.1v1.9h-1.1zM1768.0 1083.0h1.1v1.9h-1.1zM1586.2 1083.0h1.1v1.9h-1.1zM2087.9 1083.0h1.1v1.9h-1.1zM1402.2 1083.0h1.1v1.9h-1.1zM1970.6 1083.0h1.1v1.9h-1.1zM1871.3 1083.0h1.1v1.9h-1.1zM1965.6 1083.0h1.1v1.9h-1.1zM2039.6 1083.0h1.1v1.9h-1.1zM1466.4 1083.0h1.1v1.9h-1.1zM1458.8 1083.0h1.1v1.9h-1.1zM1496.3 1083.0h1.1v1.9h-1.1zM1527.0 1083.0h1.1v1.9h-1.1zM1765.9 1083.0h1.1v1.9h-1.1zM1972.1 1083.0h1.1v1.9h-1.1zM1580.9 1083.0h1.1v1.9h-1.1zM1673.4 1083.0h1.1v1.9h-1.1zM1656.4 1083.0h1.1v1.9h-1.1zM1679.9 1083.0h1.1v1.9h-1.1zM1793.4 1083.0h1.1v1.9h-1.1zM2097.0 1083.0h1.1v1.9h-1.1zM1551.3 1083.0h1.1v1.9h-1.1zM1878.4 1083.0h1.1v1.9h-1.1zM1995.4 1083.0h1.1v1.9h-1.1zM1856.8 1083.0h1.1v1.9h-1.1zM2002.8 1083.0h1.1v1.9h-1.1zM1932.3 1083.0h1.1v1.9h-1.1zM1456.8 1083.0h1.1v1.9h-1.1zM1660.8 1083.0h1.1v1.9h-1.1zM1784.6 1083.0h1.1v1.9h-1.1zM1430.1 1083.0h1.1v1.9h-1.1zM1396.7 1083.0h1.1v1.9h-1.1zM1512.4 1083.0h1.1v1.9h-1.1zM1746.9 1083.0h1.1v1.9h-1.1zM1699.8 1083.0h1.1v1.9h-1.1zM1950.0 1083.0h1.1v1.9h-1.1zM1794.0 1083.0h1.1v1.9h-1.1zM2002.6 1083.0h1.1v1.9h-1.1zM1458.1 1083.0h1.1v1.9h-1.1zM1767.1 1083.0h1.1v1.9h-1.1zM1420.4 1083.0h1.1v1.9h-1.1zM1541.0 1083.0h1.1v1.9h-1.1zM2009.8 1083.0h1.1v1.9h-1.1zM2023.7 1083.0h1.1v1.9h-1.1zM1729.5 1083.0h1.1v1.9h-1.1zM1423.2 1083.0h1.1v1.9h-1.1zM1443.1 1083.0h1.1v1.9h-1.1zM2050.9 1083.0h1.1v1.9h-1.1zM2032.1 1083.0h1.1v1.9h-1.1zM1792.3 1083.0h1.1v1.9h-1.1zM1413.5 1083.0h1.1v1.9h-1.1zM2053.1 1083.0h1.1v1.9h-1.1zM1614.5 1083.0h1.1v1.9h-1.1zM1360.4 1083.0h1.1v1.9h-1.1zM1072.4 1083.0h1.1v1.9h-1.1zM1199.5 1083.0h1.1v1.9h-1.1zM1169.1 1083.0h1.1v1.9h-1.1zM927.3 1083.0h1.1v1.9h-1.1zM680.2 1083.0h1.1v1.9h-1.1zM745.9 1083.0h1.1v1.9h-1.1zM805.9 1083.0h1.1v1.9h-1.1zM1262.8 1083.0h1.1v1.9h-1.1zM920.3 1083.0h1.1v1.9h-1.1zM1310.4 1083.0h1.1v1.9h-1.1zM876.1 1083.0h1.1v1.9h-1.1zM1741.6 1029.0h1.1v1.9h-1.1zM1793.3 1029.0h1.1v1.9h-1.1zM1363.7 1029.0h1.1v1.9h-1.1zM700.6 1035.0h1.1v1.9h-1.1zM965.3 1029.0h1.1v1.9h-1.1zM1126.1 1035.0h1.1v1.9h-1.1zM2057.9 1029.0h1.1v1.9h-1.1zM664.9 1029.0h1.1v1.9h-1.1zM1783.0 1035.0h1.1v1.9h-1.1zM1348.6 1029.0h1.1v1.9h-1.1zM1441.2 1035.0h1.1v1.9h-1.1zM1261.4 1035.0h1.1v1.9h-1.1zM748.1 1029.0h1.1v1.9h-1.1zM1804.5 1029.0h1.1v1.9h-1.1zM742.7 1029.0h1.1v1.9h-1.1zM1184.5 1029.0h1.1v1.9h-1.1zM1717.9 1029.0h1.1v1.9h-1.1zM1155.9 1029.0h1.1v1.9h-1.1zM628.7 1029.0h1.1v1.9h-1.1zM1280.5 1029.0h1.1v1.9h-1.1zM772.6 1029.0h1.1v1.9h-1.1zM898.9 1035.0h1.1v1.9h-1.1zM1447.0 1035.0h1.1v1.9h-1.1zM774.2 1029.0h1.1v1.9h-1.1zM1145.9 1029.0h1.1v1.9h-1.1zM1506.2 1029.0h1.1v1.9h-1.1zM1901.9 1029.0h1.1v1.9h-1.1zM1053.8 1035.0h1.1v1.9h-1.1zM1776.5 1029.0h1.1v1.9h-1.1zM1469.2 1029.0h1.1v1.9h-1.1zM1637.3 1029.0h1.1v1.9h-1.1zM826.9 1029.0h1.1v1.9h-1.1zM1019.0 1029.0h1.1v1.9h-1.1zM714.8 1035.0h1.1v1.9h-1.1zM1030.3 1029.0h1.1v1.9h-1.1zM1339.1 1029.0h1.1v1.9h-1.1zM1156.5 1029.0h1.1v1.9h-1.1zM1690.1 1035.0h1.1v1.9h-1.1zM1501.6 1029.0h1.1v1.9h-1.1zM1300.0 1029.0h1.1v1.9h-1.1zM1072.8 1035.0h1.1v1.9h-1.1zM1113.7 1035.0h1.1v1.9h-1.1zM1813.4 1029.0h1.1v1.9h-1.1zM1273.9 1035.0h1.1v1.9h-1.1zM1830.4 1029.0h1.1v1.9h-1.1zM1066.5 1029.0h1.1v1.9h-1.1zM1331.4 1029.0h1.1v1.9h-1.1zM2051.5 1029.0h1.1v1.9h-1.1zM1053.2 1035.0h1.1v1.9h-1.1zM2056.2 1029.0h1.1v1.9h-1.1zM1104.3 1029.0h1.1v1.9h-1.1zM1831.9 1035.0h1.1v1.9h-1.1zM1162.3 1029.0h1.1v1.9h-1.1zM1499.3 1029.0h1.1v1.9h-1.1zM1632.0 1029.0h1.1v1.9h-1.1zM2034.3 1035.0h1.1v1.9h-1.1zM2019.4 1029.0h1.1v1.9h-1.1zM1271.2 1029.0h1.1v1.9h-1.1zM1853.8 1029.0h1.1v1.9h-1.1zM1835.5 1035.0h1.1v1.9h-1.1zM1619.0 1029.0h1.1v1.9h-1.1zM1560.2 1029.0h1.1v1.9h-1.1zM995.7 1029.0h1.1v1.9h-1.1zM1681.7 1035.0h1.1v1.9h-1.1zM730.7 1035.0h1.1v1.9h-1.1zM1484.5 1035.0h1.1v1.9h-1.1zM1427.2 1029.0h1.1v1.9h-1.1zM1661.5 1029.0h1.1v1.9h-1.1zM783.2 1029.0h1.1v1.9h-1.1zM1596.2 1029.0h1.1v1.9h-1.1zM628.5 1014.5h1.1v1.8h-1.1zM629.2 1016.0h1.1v1.8h-1.1zM629.9 1017.5h1.1v1.8h-1.1zM633.6 1014.5h1.1v1.8h-1.1zM634.3 1016.0h1.1v1.8h-1.1zM635.0 1017.5h1.1v1.8h-1.1zM635.7 1019.0h1.1v1.8h-1.1zM654.9 1014.5h1.1v1.8h-1.1zM655.6 1016.0h1.1v1.8h-1.1zM656.3 1017.5h1.1v1.8h-1.1zM657.0 1019.0h1.1v1.8h-1.1zM657.7 1020.5h1.1v1.8h-1.1zM747.2 1014.5h1.1v1.8h-1.1zM747.9 1016.0h1.1v1.8h-1.1zM748.6 1017.5h1.1v1.8h-1.1zM749.3 1019.0h1.1v1.8h-1.1zM758.4 1014.5h1.1v1.8h-1.1zM759.1 1016.0h1.1v1.8h-1.1zM759.8 1017.5h1.1v1.8h-1.1zM773.0 1014.5h1.1v1.8h-1.1zM773.7 1016.0h1.1v1.8h-1.1zM774.4 1017.5h1.1v1.8h-1.1zM790.8 1014.5h1.1v1.8h-1.1zM791.5 1016.0h1.1v1.8h-1.1zM792.2 1017.5h1.1v1.8h-1.1zM792.9 1019.0h1.1v1.8h-1.1zM802.5 1014.5h1.1v1.8h-1.1zM803.2 1016.0h1.1v1.8h-1.1zM803.9 1017.5h1.1v1.8h-1.1zM945.7 1014.5h1.1v1.8h-1.1zM946.4 1016.0h1.1v1.8h-1.1zM947.1 1017.5h1.1v1.8h-1.1zM947.8 1019.0h1.1v1.8h-1.1zM956.6 1014.5h1.1v1.8h-1.1zM957.3 1016.0h1.1v1.8h-1.1zM958.0 1017.5h1.1v1.8h-1.1zM958.7 1019.0h1.1v1.8h-1.1zM959.4 1020.5h1.1v1.8h-1.1zM1100.9 1014.5h1.1v1.8h-1.1zM1101.6 1016.0h1.1v1.8h-1.1zM1102.3 1017.5h1.1v1.8h-1.1zM1103.0 1019.0h1.1v1.8h-1.1zM1103.7 1020.5h1.1v1.8h-1.1zM1104.4 1022.0h1.1v1.8h-1.1zM1119.7 1014.5h1.1v1.8h-1.1zM1120.4 1016.0h1.1v1.8h-1.1zM1121.1 1017.5h1.1v1.8h-1.1zM1213.3 1014.5h1.1v1.8h-1.1zM1214.0 1016.0h1.1v1.8h-1.1zM1214.7 1017.5h1.1v1.8h-1.1zM1224.4 1014.5h1.1v1.8h-1.1zM1225.1 1016.0h1.1v1.8h-1.1zM1225.8 1017.5h1.1v1.8h-1.1zM1226.5 1019.0h1.1v1.8h-1.1zM1227.2 1020.5h1.1v1.8h-1.1zM1336.1 1014.5h1.1v1.8h-1.1zM1336.8 1016.0h1.1v1.8h-1.1zM1337.5 1017.5h1.1v1.8h-1.1zM1338.2 1019.0h1.1v1.8h-1.1zM1339.4 1014.5h1.1v1.8h-1.1zM1340.1 1016.0h1.1v1.8h-1.1zM1340.8 1017.5h1.1v1.8h-1.1zM1341.5 1019.0h1.1v1.8h-1.1zM1741.9 1014.5h1.1v1.8h-1.1zM1742.6 1016.0h1.1v1.8h-1.1zM1743.3 1017.5h1.1v1.8h-1.1zM1743.3 1014.5h1.1v1.8h-1.1zM1744.0 1016.0h1.1v1.8h-1.1zM1744.7 1017.5h1.1v1.8h-1.1zM1745.4 1019.0h1.1v1.8h-1.1zM1750.8 1014.5h1.1v1.8h-1.1zM1751.5 1016.0h1.1v1.8h-1.1zM1752.2 1017.5h1.1v1.8h-1.1zM1767.4 1014.5h1.1v1.8h-1.1zM1768.1 1016.0h1.1v1.8h-1.1zM1768.8 1017.5h1.1v1.8h-1.1zM1776.2 1014.5h1.1v1.8h-1.1zM1776.9 1016.0h1.1v1.8h-1.1zM1777.6 1017.5h1.1v1.8h-1.1zM1788.0 1014.5h1.1v1.8h-1.1zM1788.7 1016.0h1.1v1.8h-1.1zM1789.4 1017.5h1.1v1.8h-1.1zM1790.1 1019.0h1.1v1.8h-1.1zM1790.8 1020.5h1.1v1.8h-1.1zM1791.5 1022.0h1.1v1.8h-1.1zM1898.2 1014.5h1.1v1.8h-1.1zM1898.9 1016.0h1.1v1.8h-1.1zM1899.6 1017.5h1.1v1.8h-1.1zM1900.3 1019.0h1.1v1.8h-1.1zM1901.7 1014.5h1.1v1.8h-1.1zM1902.4 1016.0h1.1v1.8h-1.1zM1903.1 1017.5h1.1v1.8h-1.1zM1903.8 1019.0h1.1v1.8h-1.1zM1907.2 1014.5h1.1v1.8h-1.1zM1907.9 1016.0h1.1v1.8h-1.1zM1908.6 1017.5h1.1v1.8h-1.1zM1909.3 1019.0h1.1v1.8h-1.1zM1923.7 1014.5h1.1v1.8h-1.1zM1924.4 1016.0h1.1v1.8h-1.1zM1925.1 1017.5h1.1v1.8h-1.1zM1925.8 1019.0h1.1v1.8h-1.1zM1926.5 1020.5h1.1v1.8h-1.1zM1939.6 1014.5h1.1v1.8h-1.1zM1940.3 1016.0h1.1v1.8h-1.1zM1941.0 1017.5h1.1v1.8h-1.1zM1941.7 1019.0h1.1v1.8h-1.1zM1942.4 1020.5h1.1v1.8h-1.1zM1996.5 1014.5h1.1v1.8h-1.1zM1997.2 1016.0h1.1v1.8h-1.1zM1997.9 1017.5h1.1v1.8h-1.1zM1998.6 1019.0h1.1v1.8h-1.1zM1999.3 1020.5h1.1v1.8h-1.1zM2009.7 1014.5h1.1v1.8h-1.1zM2010.4 1016.0h1.1v1.8h-1.1zM2011.1 1017.5h1.1v1.8h-1.1zM2011.8 1019.0h1.1v1.8h-1.1zM2048.9 1014.5h1.1v1.8h-1.1zM2049.6 1016.0h1.1v1.8h-1.1zM2050.3 1017.5h1.1v1.8h-1.1zM2056.8 1014.5h1.1v1.8h-1.1zM2057.5 1016.0h1.1v1.8h-1.1zM2058.2 1017.5h1.1v1.8h-1.1zM2062.3 1014.5h1.1v1.8h-1.1zM2063.0 1016.0h1.1v1.8h-1.1zM2063.7 1017.5h1.1v1.8h-1.1zM2064.4 1019.0h1.1v1.8h-1.1zM2065.1 1020.5h1.1v1.8h-1.1zM803.1 1051.0h1.1v1.9h-1.1zM809.8 993.7h1.1v1.9h-1.1zM809.5 985.8h1.1v1.9h-1.1zM801.6 1066.8h1.1v1.9h-1.1zM807.3 1004.8h1.1v1.9h-1.1zM813.1 985.9h1.1v1.9h-1.1zM807.5 1008.4h1.1v1.9h-1.1zM807.4 1039.0h1.1v1.9h-1.1zM809.4 1051.1h1.1v1.9h-1.1zM804.9 1038.9h1.1v1.9h-1.1zM809.7 1004.8h1.1v1.9h-1.1zM810.7 1010.5h1.1v1.9h-1.1zM807.8 988.4h1.1v1.9h-1.1zM810.2 1029.6h1.1v1.9h-1.1zM805.1 1015.2h1.1v1.9h-1.1zM805.3 1062.3h1.1v1.9h-1.1zM805.8 1063.4h1.1v1.9h-1.1zM811.4 1002.4h1.1v1.9h-1.1zM812.9 992.8h1.1v1.9h-1.1zM801.9 1057.2h1.1v1.9h-1.1zM802.8 1065.4h1.1v1.9h-1.1zM809.3 1011.5h1.1v1.9h-1.1zM806.0 1028.4h1.1v1.9h-1.1zM805.7 1021.7h1.1v1.9h-1.1zM804.9 1042.5h1.1v1.9h-1.1zM808.3 1028.7h1.1v1.9h-1.1zM806.1 1050.6h1.1v1.9h-1.1zM811.1 996.4h1.1v1.9h-1.1zM810.5 1002.4h1.1v1.9h-1.1zM802.3 1048.4h1.1v1.9h-1.1zM804.3 1022.1h1.1v1.9h-1.1zM809.7 1000.4h1.1v1.9h-1.1zM811.6 1026.6h1.1v1.9h-1.1zM806.0 1046.9h1.1v1.9h-1.1zM804.3 1047.2h1.1v1.9h-1.1zM809.5 1015.4h1.1v1.9h-1.1zM805.1 1044.9h1.1v1.9h-1.1zM803.5 1058.1h1.1v1.9h-1.1zM811.3 978.1h1.1v1.9h-1.1zM817.3 983.3h1.1v1.9h-1.1zM809.5 1057.2h1.1v1.9h-1.1zM814.1 994.9h1.1v1.9h-1.1zM804.2 1045.1h1.1v1.9h-1.1zM801.8 1033.0h1.1v1.9h-1.1zM804.8 1015.7h1.1v1.9h-1.1zM1243.7 1117.0h1.1v1.9h-1.1zM1243.9 1116.7h1.1v1.9h-1.1zM1246.1 1111.1h1.1v1.9h-1.1zM1251.1 1099.5h1.1v1.9h-1.1zM1247.4 1110.5h1.1v1.9h-1.1zM1240.5 1120.7h1.1v1.9h-1.1zM1246.7 1117.0h1.1v1.9h-1.1zM1248.7 1098.7h1.1v1.9h-1.1zM1245.8 1096.6h1.1v1.9h-1.1zM1245.8 1102.5h1.1v1.9h-1.1zM1861.8 979.6h1.1v1.9h-1.1zM1864.6 980.1h1.1v1.9h-1.1zM1865.7 1004.5h1.1v1.9h-1.1zM1867.6 988.7h1.1v1.9h-1.1zM1867.5 997.0h1.1v1.9h-1.1zM1869.7 988.1h1.1v1.9h-1.1zM1866.3 1001.9h1.1v1.9h-1.1zM1864.9 989.1h1.1v1.9h-1.1zM1858.9 1005.7h1.1v1.9h-1.1zM1860.8 990.9h1.1v1.9h-1.1zM1758.4 999.3h1.1v1.9h-1.1zM1764.8 998.7h1.1v1.9h-1.1zM1763.0 992.8h1.1v1.9h-1.1zM1761.6 994.5h1.1v1.9h-1.1zM1754.8 986.1h1.1v1.9h-1.1zM1759.4 1002.1h1.1v1.9h-1.1zM1756.2 984.0h1.1v1.9h-1.1zM1757.8 982.9h1.1v1.9h-1.1zM1885.1 1089.5h1.1v1.9h-1.1zM1947.0 1085.8h1.1v1.9h-1.1zM689.1 1066.2h1.1v1.9h-1.1zM1861.8 978.3h1.1v1.9h-1.1zM1999.3 998.7h1.1v1.9h-1.1zM1298.0 1118.8h1.1v1.9h-1.1zM1255.4 1119.4h1.1v1.9h-1.1zM1969.7 1103.0h1.1v1.9h-1.1zM1068.7 1101.9h1.1v1.9h-1.1zM1921.0 989.4h1.1v1.9h-1.1zM1155.5 987.9h1.1v1.9h-1.1zM1606.5 1069.4h1.1v1.9h-1.1zM697.8 1066.1h1.1v1.9h-1.1zM1697.6 1084.8h1.1v1.9h-1.1zM1257.5 989.1h1.1v1.9h-1.1zM762.2 1006.7h1.1v1.9h-1.1zM736.6 1061.5h1.1v1.9h-1.1zM1391.3 1040.1h1.1v1.9h-1.1zM633.0 1025.5h1.1v1.9h-1.1zM799.8 1099.9h1.1v1.9h-1.1zM1650.2 1044.8h1.1v1.9h-1.1zM960.5 988.9h1.1v1.9h-1.1zM1816.2 990.9h1.1v1.9h-1.1zM1166.1 1019.1h1.1v1.9h-1.1zM1188.6 1093.1h1.1v1.9h-1.1zM1917.9 1068.4h1.1v1.9h-1.1zM1625.2 985.9h1.1v1.9h-1.1zM1456.4 1063.9h1.1v1.9h-1.1zM864.4 1026.6h1.1v1.9h-1.1zM937.0 1083.8h1.1v1.9h-1.1zM1985.2 1064.7h1.1v1.9h-1.1zM1277.1 1007.3h1.1v1.9h-1.1zM1950.6 996.2h1.1v1.9h-1.1zM803.6 1081.1h1.1v1.9h-1.1zM1142.3 1037.8h1.1v1.9h-1.1zM1794.2 1011.7h1.1v1.9h-1.1zM1577.0 1011.7h1.1v1.9h-1.1zM1512.3 1079.8h1.1v1.9h-1.1zM1043.5 1111.5h1.1v1.9h-1.1zM660.8 1098.0h1.1v1.9h-1.1zM1919.9 1005.6h1.1v1.9h-1.1zM1521.1 1003.2h1.1v1.9h-1.1zM1202.0 1069.0h1.1v1.9h-1.1zM1783.4 1090.3h1.1v1.9h-1.1zM975.9 1031.6h1.1v1.9h-1.1zM978.5 1067.9h1.1v1.9h-1.1zM726.3 1104.0h1.1v1.9h-1.1zM638.9 1028.0h1.1v1.9h-1.1zM1090.3 1031.7h1.1v1.9h-1.1zM1865.2 1036.6h1.1v1.9h-1.1zM1431.2 1000.9h1.1v1.9h-1.1zM1319.5 1118.2h1.1v1.9h-1.1zM729.2 1060.6h1.1v1.9h-1.1zM641.5 1007.1h1.1v1.9h-1.1zM1989.2 1112.6h1.1v1.9h-1.1zM1211.2 1017.3h1.1v1.9h-1.1zM1677.8 1086.5h1.1v1.9h-1.1zM1249.2 1033.9h1.1v1.9h-1.1zM1570.9 1053.4h1.1v1.9h-1.1zM847.4 988.0h1.1v1.9h-1.1zM738.2 1108.6h1.1v1.9h-1.1zM2065.9 998.4h1.1v1.9h-1.1zM1105.6 1060.4h1.1v1.9h-1.1zM1752.9 1069.6h1.1v1.9h-1.1zM1574.8 1020.7h1.1v1.9h-1.1zM1269.8 1113.3h1.1v1.9h-1.1zM974.9 1011.2h1.1v1.9h-1.1zM1992.2 992.7h1.1v1.9h-1.1zM1529.0 983.9h1.1v1.9h-1.1zM1608.8 1070.8h1.1v1.9h-1.1zM881.5 977.8h1.1v1.9h-1.1zM824.5 977.6h1.1v1.9h-1.1zM1357.2 1025.9h1.1v1.9h-1.1zM1388.0 1094.4h1.1v1.9h-1.1zM1005.5 1029.5h1.1v1.9h-1.1zM1732.9 1101.8h1.1v1.9h-1.1zM1707.9 993.0h1.1v1.9h-1.1zM1955.5 1024.2h1.1v1.9h-1.1zM1257.7 1051.4h1.1v1.9h-1.1zM1011.0 1116.4h1.1v1.9h-1.1zM1551.6 1047.4h1.1v1.9h-1.1zM1378.5 984.0h1.1v1.9h-1.1zM1895.4 1000.0h1.1v1.9h-1.1zM854.3 1087.4h1.1v1.9h-1.1zM1947.2 1073.1h1.1v1.9h-1.1zM792.0 1082.7h1.1v1.9h-1.1zM624.8 1099.7h1.1v1.9h-1.1zM639.2 982.6h1.1v1.9h-1.1zM1160.8 1108.5h1.1v1.9h-1.1zM886.4 1114.3h1.1v1.9h-1.1zM673.4 1091.6h1.1v1.9h-1.1zM1679.9 1070.4h1.1v1.9h-1.1zM954.0 1011.7h1.1v1.9h-1.1zM1979.2 1022.1h1.1v1.9h-1.1zM1846.0 1058.3h1.1v1.9h-1.1zM798.1 1073.0h1.1v1.9h-1.1zM699.1 1008.1h1.1v1.9h-1.1zM1385.9 982.6h1.1v1.9h-1.1zM1215.6 1102.3h1.1v1.9h-1.1zM1905.3 1087.4h1.1v1.9h-1.1zM1081.8 988.4h1.1v1.9h-1.1zM1298.4 1029.1h1.1v1.9h-1.1zM1053.4 1089.0h1.1v1.9h-1.1zM1717.8 1010.9h1.1v1.9h-1.1zM1167.1 1115.9h1.1v1.9h-1.1zM2100.7 1087.7h1.1v1.9h-1.1zM1707.2 1054.7h1.1v1.9h-1.1zM1801.4 997.7h1.1v1.9h-1.1zM2003.7 979.4h1.1v1.9h-1.1zM1424.1 1067.6h1.1v1.9h-1.1zM1649.4 977.4h1.1v1.9h-1.1zM1117.8 1085.3h1.1v1.9h-1.1zM1179.0 1082.3h1.1v1.9h-1.1zM1077.0 1005.5h1.1v1.9h-1.1zM2079.0 1036.5h1.1v1.9h-1.1zM2046.4 1116.0h1.1v1.9h-1.1zM832.1 1016.3h1.1v1.9h-1.1zM686.1 1009.3h1.1v1.9h-1.1zM1874.9 1035.5h1.1v1.9h-1.1zM1949.1 1042.0h1.1v1.9h-1.1zM1730.1 1059.6h1.1v1.9h-1.1zM1370.5 1067.8h1.1v1.9h-1.1zM1205.8 1061.2h1.1v1.9h-1.1zM713.4 1071.4h1.1v1.9h-1.1zM814.8 1018.0h1.1v1.9h-1.1zM1882.9 1109.4h1.1v1.9h-1.1zM1203.7 1095.8h1.1v1.9h-1.1zM1104.8 1041.2h1.1v1.9h-1.1zM967.4 1111.9h1.1v1.9h-1.1zM822.9 1086.9h1.1v1.9h-1.1zM782.6 991.2h1.1v1.9h-1.1zM1287.7 1021.2h1.1v1.9h-1.1zM800.1 1027.6h1.1v1.9h-1.1zM1763.4 1041.1h1.1v1.9h-1.1zM1308.1 1098.8h1.1v1.9h-1.1zM755.1 1092.3h1.1v1.9h-1.1zM1072.2 1077.5h1.1v1.9h-1.1zM1515.7 1007.0h1.1v1.9h-1.1zM1891.3 997.4h1.1v1.9h-1.1zM1675.6 1115.4h1.1v1.9h-1.1zM1208.6 983.0h1.1v1.9h-1.1zM1064.2 1094.1h1.1v1.9h-1.1zM878.8 1113.1h1.1v1.9h-1.1zM1888.4 1056.1h1.1v1.9h-1.1zM1436.8 989.6h1.1v1.9h-1.1zM772.1 1090.3h1.1v1.9h-1.1zM801.1 984.9h1.1v1.9h-1.1zM1779.2 1008.0h1.1v1.9h-1.1zM914.8 1033.7h1.1v1.9h-1.1zM1638.8 1111.0h1.1v1.9h-1.1zM745.6 1060.4h1.1v1.9h-1.1zM1981.5 986.8h1.1v1.9h-1.1zM2099.8 1004.5h1.1v1.9h-1.1zM1579.0 1092.5h1.1v1.9h-1.1zM757.4 1098.0h1.1v1.9h-1.1zM1820.6 993.6h1.1v1.9h-1.1zM2018.4 983.3h1.1v1.9h-1.1zM1991.5 1038.4h1.1v1.9h-1.1zM1695.3 1047.4h1.1v1.9h-1.1zM1188.6 1037.4h1.1v1.9h-1.1zM1145.9 1106.8h1.1v1.9h-1.1zM1028.8 1040.2h1.1v1.9h-1.1zM841.4 1064.4h1.1v1.9h-1.1zM1536.0 1069.2h1.1v1.9h-1.1zM1360.9 1103.1h1.1v1.9h-1.1zM1331.4 988.6h1.1v1.9h-1.1zM1189.0 1036.4h1.1v1.9h-1.1zM1574.1 1090.8h1.1v1.9h-1.1zM990.5 1119.1h1.1v1.9h-1.1zM1427.2 978.8h1.1v1.9h-1.1zM1188.2 1078.7h1.1v1.9h-1.1zM1332.4 1088.5h1.1v1.9h-1.1zM1131.2 1057.5h1.1v1.9h-1.1zM1097.9 1014.9h1.1v1.9h-1.1zM659.7 1062.0h1.1v1.9h-1.1zM664.5 1092.7h1.1v1.9h-1.1zM1037.6 1092.4h1.1v1.9h-1.1zM1320.5 1027.5h1.1v1.9h-1.1zM1487.1 1009.5h1.1v1.9h-1.1zM857.7 1011.7h1.1v1.9h-1.1zM978.6 1052.9h1.1v1.9h-1.1zM1794.4 1082.1h1.1v1.9h-1.1zM1754.1 1112.5h1.1v1.9h-1.1zM1474.8 1117.5h1.1v1.9h-1.1zM1197.0 1110.7h1.1v1.9h-1.1zM2091.5 1001.0h1.1v1.9h-1.1zM971.8 1021.8h1.1v1.9h-1.1zM1715.6 1027.7h1.1v1.9h-1.1zM1498.3 1077.3h1.1v1.9h-1.1zM1142.5 1057.7h1.1v1.9h-1.1zM831.7 1112.6h1.1v1.9h-1.1zM1861.8 1092.7h1.1v1.9h-1.1zM2060.1 1054.1h1.1v1.9h-1.1zM881.4 981.5h1.1v1.9h-1.1zM704.3 1062.6h1.1v1.9h-1.1zM650.6 1044.8h1.1v1.9h-1.1zM1113.0 1064.4h1.1v1.9h-1.1zM1817.0 1025.1h1.1v1.9h-1.1zM884.2 1091.5h1.1v1.9h-1.1zM1908.6 984.6h1.1v1.9h-1.1zM840.1 1077.5h1.1v1.9h-1.1zM831.1 992.0h1.1v1.9h-1.1zM1401.5 1028.5h1.1v1.9h-1.1zM728.6 1077.5h1.1v1.9h-1.1zM1603.0 1060.4h1.1v1.9h-1.1zM1120.1 1022.5h1.1v1.9h-1.1zM2068.2 1081.5h1.1v1.9h-1.1zM1268.9 1068.1h1.1v1.9h-1.1zM1343.5 1021.7h1.1v1.9h-1.1zM1669.8 1056.9h1.1v1.9h-1.1zM1940.3 1064.4h1.1v1.9h-1.1zM1150.2 1071.8h1.1v1.9h-1.1zM1828.8 1030.5h1.1v1.9h-1.1zM1709.5 1018.4h1.1v1.9h-1.1zM884.5 976.3h1.1v1.9h-1.1zM1662.1 1058.5h1.1v1.9h-1.1zM1882.7 1087.0h1.1v1.9h-1.1zM1462.6 1002.2h1.1v1.9h-1.1zM1092.9 1092.5h1.1v1.9h-1.1zM1527.7 1068.1h1.1v1.9h-1.1zM775.4 1047.5h1.1v1.9h-1.1zM1112.1 987.2h1.1v1.9h-1.1zM1135.3 1022.0h1.1v1.9h-1.1zM1564.5 1114.7h1.1v1.9h-1.1zM1839.5 1072.5h1.1v1.9h-1.1zM1702.5 1024.3h1.1v1.9h-1.1zM637.9 1006.2h1.1v1.9h-1.1zM1649.0 1026.5h1.1v1.9h-1.1zM1788.2 1079.7h1.1v1.9h-1.1zM692.4 1039.1h1.1v1.9h-1.1zM1243.3 1000.0h1.1v1.9h-1.1zM1235.0 1103.0h1.1v1.9h-1.1zM1141.9 1030.1h1.1v1.9h-1.1zM1850.1 1089.6h1.1v1.9h-1.1zM1478.3 1085.2h1.1v1.9h-1.1zM955.5 1041.0h1.1v1.9h-1.1zM1806.2 980.8h1.1v1.9h-1.1zM650.8 1013.6h1.1v1.9h-1.1zM776.3 1025.2h1.1v1.9h-1.1zM1937.8 999.2h1.1v1.9h-1.1zM732.2 1111.6h1.1v1.9h-1.1zM2071.4 1024.7h1.1v1.9h-1.1zM2082.2 1104.6h1.1v1.9h-1.1zM1665.8 1038.1h1.1v1.9h-1.1zM1590.3 1063.5h1.1v1.9h-1.1zM1264.9 983.7h1.1v1.9h-1.1zM1112.0 1116.3h1.1v1.9h-1.1zM1228.0 1055.8h1.1v1.9h-1.1zM1993.6 1053.8h1.1v1.9h-1.1zM1600.7 1018.8h1.1v1.9h-1.1zM763.2 1032.6h1.1v1.9h-1.1zM1436.1 1046.7h1.1v1.9h-1.1zM701.8 976.5h1.1v1.9h-1.1zM751.0 1094.6h1.1v1.9h-1.1zM1548.0 1045.2h1.1v1.9h-1.1zM764.8 1005.8h1.1v1.9h-1.1zM1567.4 1116.7h1.1v1.9h-1.1zM1323.3 992.6h1.1v1.9h-1.1zM1785.0 1043.8h1.1v1.9h-1.1zM1948.1 1014.2h1.1v1.9h-1.1zM1572.9 1031.8h1.1v1.9h-1.1zM1171.2 1030.9h1.1v1.9h-1.1zM897.7 982.4h1.1v1.9h-1.1zM1273.1 1013.9h1.1v1.9h-1.1zM1862.4 1057.3h1.1v1.9h-1.1zM845.1 1076.3h1.1v1.9h-1.1zM764.4 1072.2h1.1v1.9h-1.1zM1819.5 1035.6h1.1v1.9h-1.1zM1742.8 1008.8h1.1v1.9h-1.1zM711.4 1031.7h1.1v1.9h-1.1zM1396.0 1115.1h1.1v1.9h-1.1zM1639.9 1110.8h1.1v1.9h-1.1zM1470.3 1009.9h1.1v1.9h-1.1zM1064.2 1032.9h1.1v1.9h-1.1zM1887.4 981.0h1.1v1.9h-1.1zM1468.1 1050.4h1.1v1.9h-1.1zM1468.5 1117.5h1.1v1.9h-1.1zM839.7 1112.7h1.1v1.9h-1.1zM1286.9 1112.7h1.1v1.9h-1.1zM868.9 1006.5h1.1v1.9h-1.1zM906.8 982.1h1.1v1.9h-1.1zM737.2 1074.4h1.1v1.9h-1.1zM920.4 1094.4h1.1v1.9h-1.1zM840.3 1061.7h1.1v1.9h-1.1zM1095.2 1080.7h1.1v1.9h-1.1zM1818.3 988.5h1.1v1.9h-1.1zM1446.1 1055.5h1.1v1.9h-1.1zM1891.4 1050.8h1.1v1.9h-1.1zM1981.2 977.8h1.1v1.9h-1.1zM1659.7 1060.6h1.1v1.9h-1.1zM1780.2 992.2h1.1v1.9h-1.1zM842.9 1057.6h1.1v1.9h-1.1zM1485.1 1114.9h1.1v1.9h-1.1zM769.6 991.2h1.1v1.9h-1.1zM1777.1 1089.1h1.1v1.9h-1.1zM1907.5 1102.7h1.1v1.9h-1.1zM1922.9 1014.0h1.1v1.9h-1.1zM1592.1 1058.4h1.1v1.9h-1.1zM1322.5 1000.8h1.1v1.9h-1.1zM1218.6 1065.0h1.1v1.9h-1.1zM1630.6 1033.8h1.1v1.9h-1.1zM1208.0 1102.6h1.1v1.9h-1.1zM1645.0 983.1h1.1v1.9h-1.1zM1325.7 1014.7h1.1v1.9h-1.1zM1173.3 1024.7h1.1v1.9h-1.1zM1798.0 1020.8h1.1v1.9h-1.1zM1870.9 1099.6h1.1v1.9h-1.1zM1636.6 1116.0h1.1v1.9h-1.1zM959.1 1019.3h1.1v1.9h-1.1zM1723.9 1087.5h1.1v1.9h-1.1zM1096.8 1080.9h1.1v1.9h-1.1zM1518.2 988.9h1.1v1.9h-1.1zM1276.1 1107.5h1.1v1.9h-1.1zM1224.8 1045.8h1.1v1.9h-1.1zM1387.0 1029.8h1.1v1.9h-1.1zM704.4 1090.0h1.1v1.9h-1.1zM718.3 1078.2h1.1v1.9h-1.1zM1219.2 1088.4h1.1v1.9h-1.1zM1398.5 1057.9h1.1v1.9h-1.1zM878.7 1102.0h1.1v1.9h-1.1zM918.7 984.3h1.1v1.9h-1.1zM670.0 983.3h1.1v1.9h-1.1zM1155.4 1004.7h1.1v1.9h-1.1zM1167.3 1042.8h1.1v1.9h-1.1zM1209.7 1108.9h1.1v1.9h-1.1zM1631.2 1010.8h1.1v1.9h-1.1zM1345.9 1040.2h1.1v1.9h-1.1zM2045.5 1044.3h1.1v1.9h-1.1zM1438.6 1025.6h1.1v1.9h-1.1zM1863.2 1013.2h1.1v1.9h-1.1z" fill="#4d3784"/></svg>
</div>
</body></html>
